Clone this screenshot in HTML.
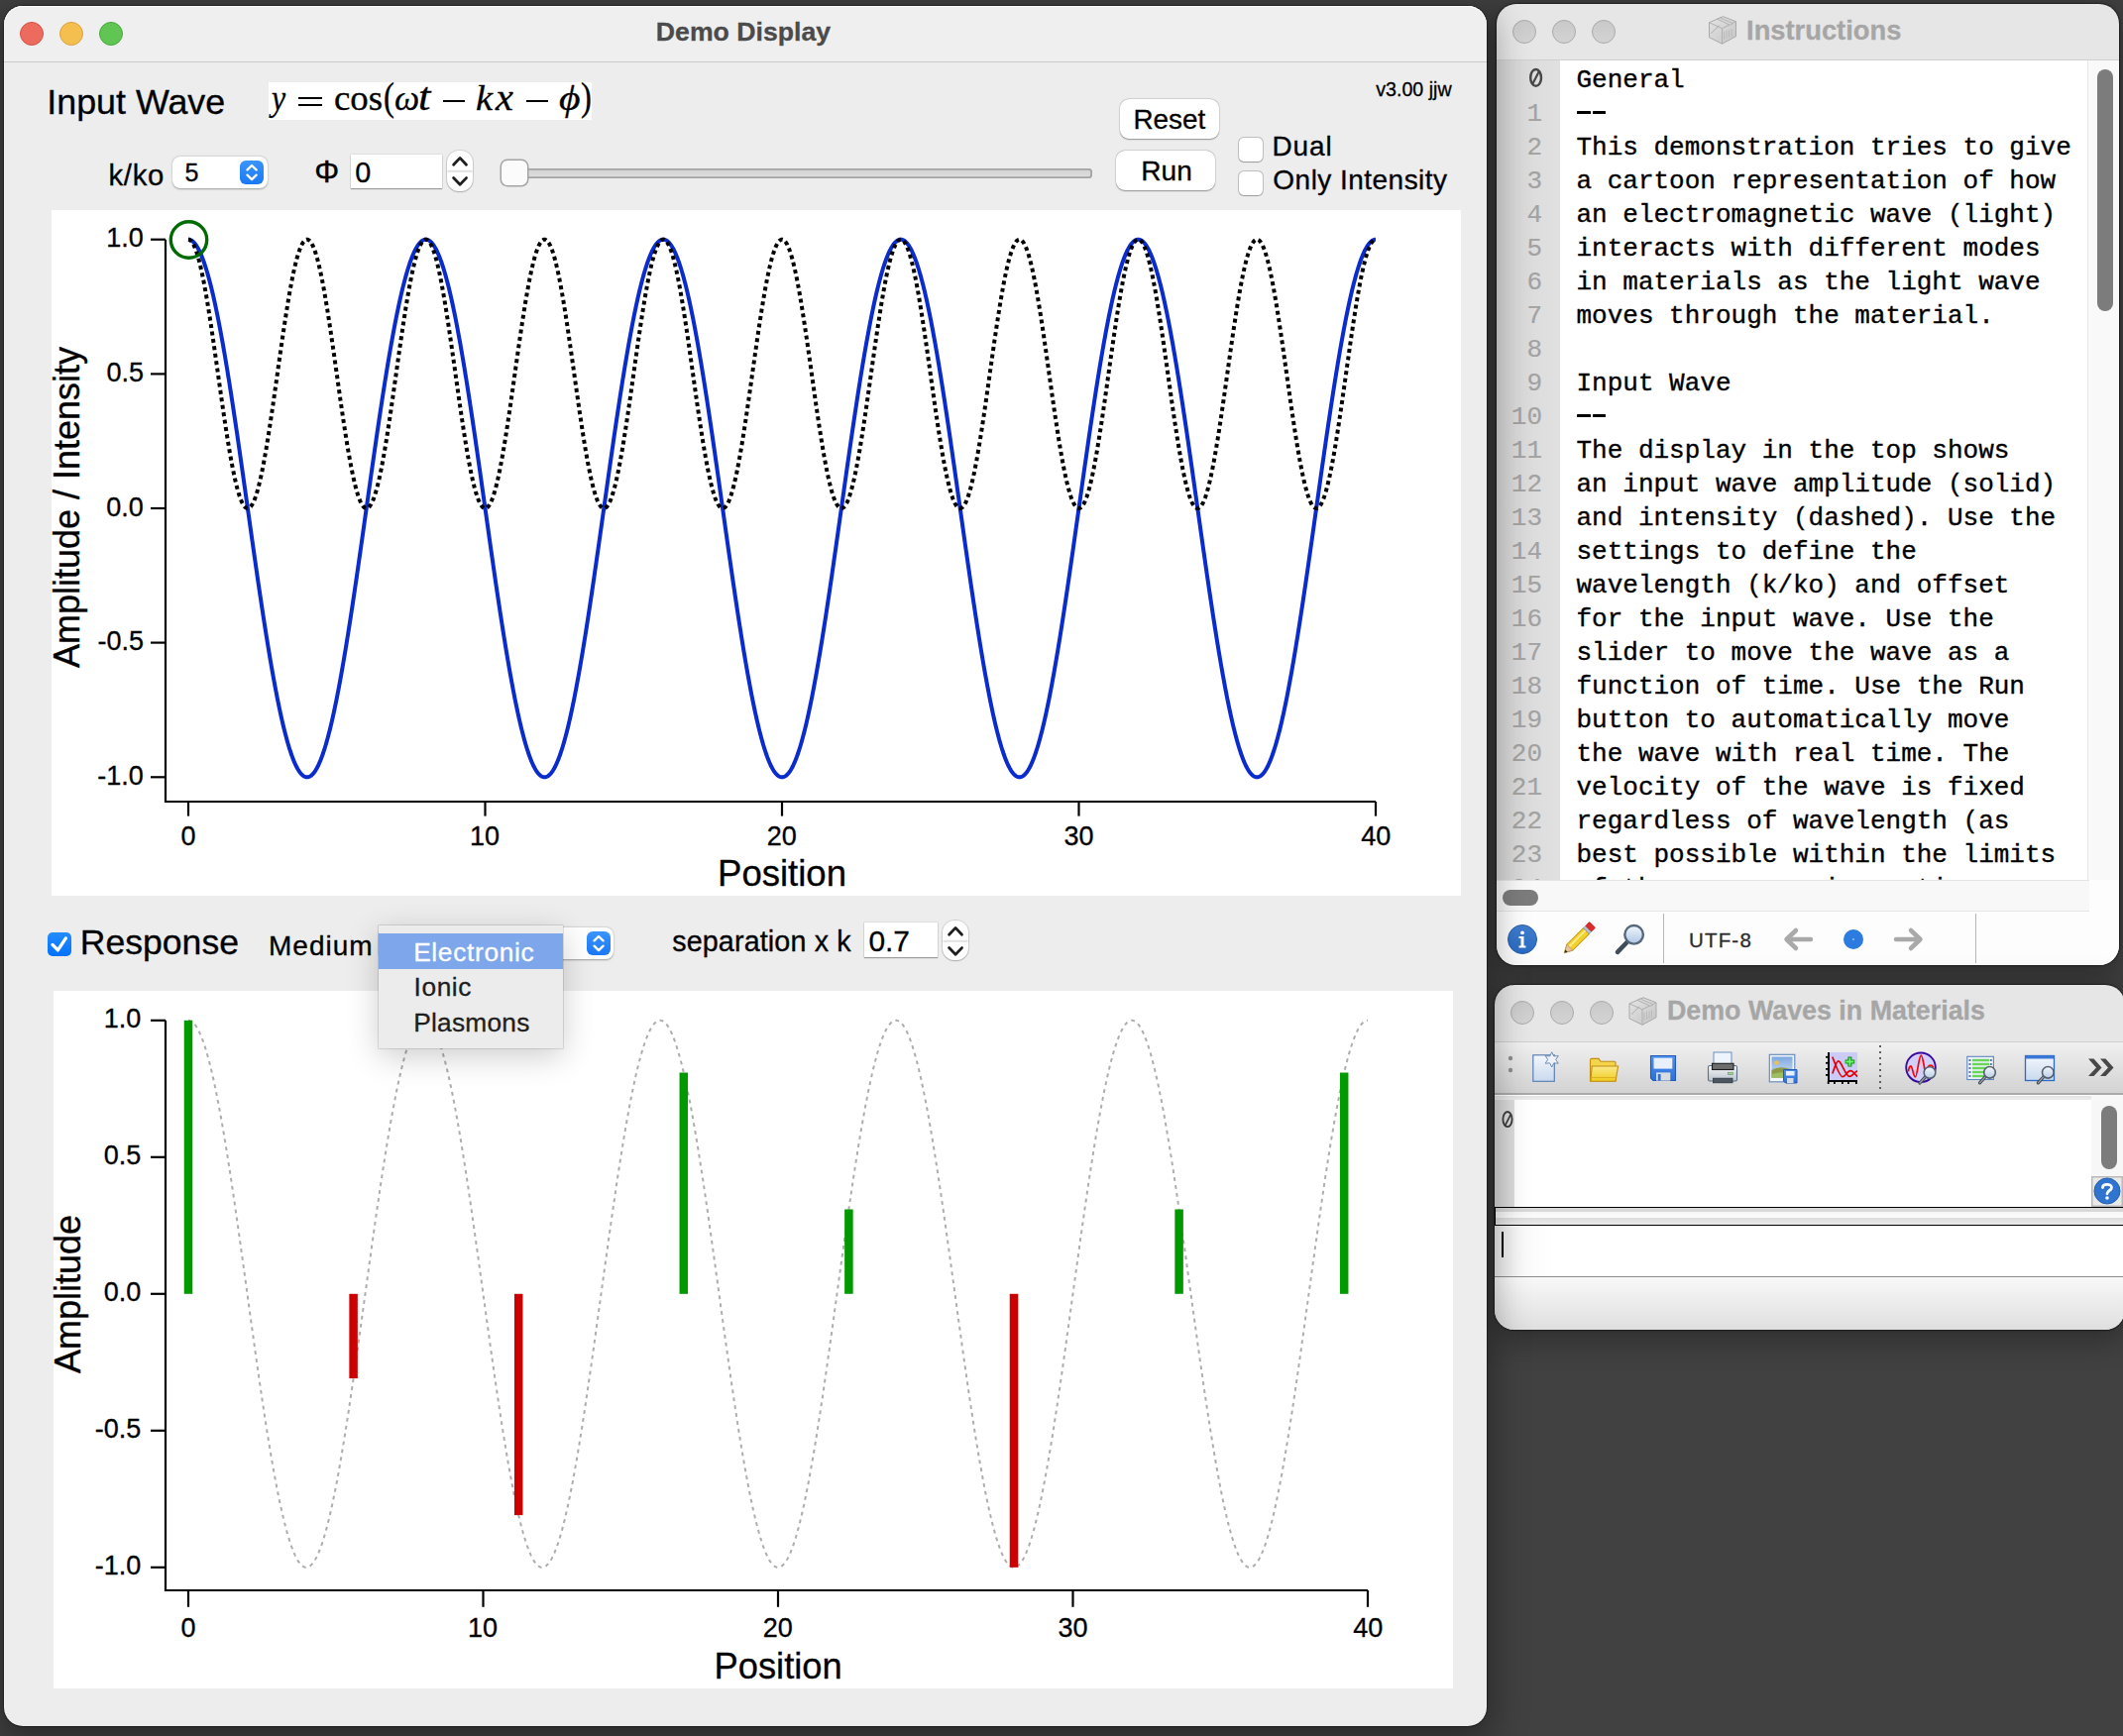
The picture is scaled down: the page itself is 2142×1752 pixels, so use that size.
<!DOCTYPE html><html><head><meta charset="utf-8"><title>Demo Display</title><style>
*{margin:0;padding:0;box-sizing:border-box}
html,body{width:2142px;height:1752px;overflow:hidden;background:#414141;font-family:"Liberation Sans",sans-serif}
.a{position:absolute}
.t{position:absolute;white-space:nowrap;line-height:1;-webkit-text-stroke-width:0.3px}
svg{position:absolute;overflow:visible}
</style></head><body>
<div class="a" style="left:0;top:0;width:2142px;height:1752px;z-index:5">
<div class="a" style="left:4px;top:6px;width:1496px;height:1736px;border-radius:19px;background:#ededed;box-shadow:0 0 1px 1px rgba(0,0,0,0.35),0 10px 36px 6px rgba(0,0,0,0.36)"></div>
<div class="a" style="left:4px;top:6px;width:1496px;height:56px;background:#efefef;border-radius:19px 19px 0 0;box-shadow:inset 0 1px 0 rgba(255,255,255,0.9)"></div>
<div class="a" style="left:4px;top:62px;width:1496px;height:1px;background:#c9c9c9"></div>
<div class="a" style="left:20px;top:22px;width:24px;height:24px;border-radius:50%;background:#ed6a5e;border:1px solid #d4524a"></div>
<div class="a" style="left:60px;top:22px;width:24px;height:24px;border-radius:50%;background:#f5bf4f;border:1px solid #d8a13c"></div>
<div class="a" style="left:100px;top:22px;width:24px;height:24px;border-radius:50%;background:#61c554;border:1px solid #4aa73e"></div>
<div class="t" style="top:19.33px;font-size:26.66px;font-family:'Liberation Sans',sans-serif;color:#4b4b4b;font-weight:700;left:661.82px;">Demo Display</div>
<div class="t" style="top:85.66px;font-size:35.84px;font-family:'Liberation Sans',sans-serif;color:#000;left:47.29px;">Input Wave</div>
<div class="a" style="left:271px;top:83px;width:326px;height:38px;background:#fff"></div>
<div class="t" style="left:273.66px;top:80.51px;font-size:36px;font-family:'Liberation Serif',serif;transform-origin:0 30.15px;transform:scale(0.8841,0.9838);font-style:italic;">y</div>
<div class="a" style="left:301px;top:97.5px;width:24px;height:2.0999999999999943px;background:#000"></div>
<div class="a" style="left:301px;top:104.6px;width:24px;height:2.0px;background:#000"></div>
<div class="t" style="left:336.50px;top:81.10px;font-size:36px;font-family:'Liberation Serif',serif;transform-origin:0 30.15px;transform:scale(1.0239,0.9934);">cos</div>
<div class="t" style="left:387.26px;top:81.00px;font-size:36px;font-family:'Liberation Serif',serif;transform-origin:0 30.15px;transform:scale(0.9085,1.1029);">(</div>
<div class="t" style="left:397.52px;top:81.00px;font-size:36px;font-family:'Liberation Serif',serif;transform-origin:0 30.15px;transform:scale(0.9894,0.9927);font-style:italic;">ω</div>
<div class="t" style="left:421.94px;top:80.95px;font-size:36px;font-family:'Liberation Serif',serif;transform-origin:0 30.15px;transform:scale(1.2362,1.1397);font-style:italic;">t</div>
<div class="a" style="left:446.8px;top:100.6px;width:22.30000000000001px;height:2.0px;background:#000"></div>
<div class="t" style="left:479.69px;top:81.15px;font-size:36px;font-family:'Liberation Serif',serif;transform-origin:0 30.15px;transform:scale(1.0667,1.0209);font-style:italic;">k</div>
<div class="t" style="left:500.49px;top:81.35px;font-size:36px;font-family:'Liberation Serif',serif;transform-origin:0 30.15px;transform:scale(1.1204,1.0349);font-style:italic;">x</div>
<div class="a" style="left:530.9px;top:100.6px;width:22.0px;height:2.0px;background:#000"></div>
<div class="t" style="left:564.35px;top:80.55px;font-size:36px;font-family:'Liberation Serif',serif;transform-origin:0 30.15px;transform:scale(1.1555,1.0048);font-style:italic;">ϕ</div>
<div class="t" style="left:585.85px;top:81.00px;font-size:36px;font-family:'Liberation Serif',serif;transform-origin:0 30.15px;transform:scale(0.9085,1.1029);">)</div>
<div class="t" style="top:81.37px;font-size:19.64px;font-family:'Liberation Sans',sans-serif;color:#000;left:1388.23px;">v3.00 jjw</div>
<div class="t" style="top:161.50px;font-size:29.30px;font-family:'Liberation Sans',sans-serif;color:#000;letter-spacing:0.690px;left:109.53px;">k/ko</div>
<div class="a" style="left:174px;top:158px;width:96px;height:32px;background:#fff;border-radius:8px;box-shadow:0 0.5px 2px rgba(0,0,0,0.35)"></div>
<div class="t" style="top:161.54px;font-size:25.00px;font-family:'Liberation Sans',sans-serif;color:#000;left:186.40px;">5</div>
<div class="a" style="left:242px;top:162px;width:24px;height:24px;background:linear-gradient(#3a95fd,#1a78f5);border-radius:6px"></div>
<svg style="left:242px;top:162px" width="24" height="24" viewBox="0 0 24 24"><path d="M7.5 9.4 L12 5 L16.6 9.4 M7.5 14.6 L12 19.1 L16.6 14.6" fill="none" stroke="#fff" stroke-width="2.3" stroke-linecap="round" stroke-linejoin="round"/></svg>
<div class="t" style="top:158.02px;font-size:31.28px;font-family:'Liberation Sans',sans-serif;color:#000;left:317.21px;">&#934;</div>
<div class="a" style="left:353.5px;top:155.7px;width:92.5px;height:34.80000000000001px;background:#fff;box-shadow:0 1px 1px rgba(0,0,0,0.30),0 0 0 0.5px rgba(0,0,0,0.12)"></div>
<div class="t" style="top:159.92px;font-size:28.80px;font-family:'Liberation Sans',sans-serif;color:#000;left:358.27px;">0</div>
<div class="a" style="left:451px;top:152px;width:26px;height:41px;background:#fff;border-radius:12px;box-shadow:0 0 0 1px rgba(0,0,0,0.10),0 1px 1.5px rgba(0,0,0,0.2)"></div>
<svg style="left:451px;top:152px" width="26" height="41" viewBox="0 0 26 41"><rect x="0.5" y="19.8" width="25" height="2" fill="#e2e2e2"/><path d="M6.6 14.2 L13.1 7.4 L19.5 14.2 M6.6 27.6 L13.1 34.2 L19.5 27.6" fill="none" stroke="#1e1e1e" stroke-width="2.8" stroke-linecap="round" stroke-linejoin="round"/></svg>
<div class="a" style="left:507px;top:170.2px;width:595px;height:9.600000000000023px;border-radius:3.5px;background:linear-gradient(#d3d3d3,#dedede);box-shadow:inset 0 0 0 1.8px #a4a4a4"></div>
<div class="a" style="left:506px;top:162.4px;width:25.5px;height:25.099999999999994px;border-radius:6px;background:#fbfbfb;box-shadow:0 0 0 1.5px #a4a4a4"></div>
<div class="a" style="left:1129.5px;top:99.8px;width:100.5px;height:40.2px;background:#fff;border-radius:9px;box-shadow:0 0.5px 1.5px rgba(0,0,0,0.35),0 0 0 0.5px rgba(0,0,0,0.1)"></div>
<div class="t" style="top:106.51px;font-size:27.86px;font-family:'Liberation Sans',sans-serif;color:#000;left:1143.41px;">Reset</div>
<div class="a" style="left:1126px;top:151.8px;width:99.59999999999991px;height:40.39999999999998px;background:#fff;border-radius:9px;box-shadow:0 0.5px 1.5px rgba(0,0,0,0.35),0 0 0 0.5px rgba(0,0,0,0.1)"></div>
<div class="t" style="top:158.62px;font-size:28.09px;font-family:'Liberation Sans',sans-serif;color:#000;left:1151.30px;">Run</div>
<div class="a" style="left:1250px;top:139.4px;width:23.5px;height:23.400000000000006px;background:#fff;border-radius:5px;box-shadow:0 0 0 1px rgba(0,0,0,0.18),0 0.5px 1px rgba(0,0,0,0.2)"></div>
<div class="a" style="left:1250px;top:173.3px;width:23.5px;height:23.399999999999977px;background:#fff;border-radius:5px;box-shadow:0 0 0 1px rgba(0,0,0,0.18),0 0.5px 1px rgba(0,0,0,0.2)"></div>
<div class="t" style="top:134.30px;font-size:28.00px;font-family:'Liberation Sans',sans-serif;color:#000;letter-spacing:0.895px;left:1283.40px;">Dual</div>
<div class="t" style="top:168.30px;font-size:28.00px;font-family:'Liberation Sans',sans-serif;color:#000;letter-spacing:0.466px;left:1284.37px;">Only Intensity</div>
<div class="a" style="left:52px;top:212px;width:1422px;height:692px;background:#fff"></div>
<svg style="left:0;top:0" width="2142" height="1752" viewBox="0 0 2142 1752"><path d="M167 241.7 V809 H1388" fill="none" stroke="#000" stroke-width="2.2"/><path d="M152 241.7 H167" stroke="#000" stroke-width="2.2"/><path d="M152 377.4 H167" stroke="#000" stroke-width="2.2"/><path d="M152 513.0 H167" stroke="#000" stroke-width="2.2"/><path d="M152 648.6 H167" stroke="#000" stroke-width="2.2"/><path d="M152 784.3 H167" stroke="#000" stroke-width="2.2"/><path d="M190.0 809 V823.6" stroke="#000" stroke-width="2.2"/><path d="M489.5 809 V823.6" stroke="#000" stroke-width="2.2"/><path d="M789.0 809 V823.6" stroke="#000" stroke-width="2.2"/><path d="M1088.5 809 V823.6" stroke="#000" stroke-width="2.2"/><path d="M1388.0 809 V823.6" stroke="#000" stroke-width="2.2"/><polyline points="190.00,241.70 190.60,241.73 191.20,241.83 191.80,242.00 192.40,242.24 193.00,242.54 193.59,242.90 194.19,243.34 194.79,243.84 195.39,244.41 195.99,245.04 196.59,245.74 197.19,246.51 197.79,247.34 198.39,248.23 198.99,249.20 199.58,250.22 200.18,251.32 200.78,252.47 201.38,253.69 201.98,254.98 202.58,256.33 203.18,257.74 203.78,259.21 204.38,260.75 204.97,262.35 205.57,264.01 206.17,265.74 206.77,267.52 207.37,269.37 207.97,271.27 208.57,273.23 209.17,275.26 209.77,277.34 210.37,279.48 210.97,281.68 211.56,283.93 212.16,286.25 212.76,288.61 213.36,291.04 213.96,293.51 214.56,296.05 215.16,298.63 215.76,301.27 216.36,303.96 216.95,306.70 217.55,309.49 218.15,312.34 218.75,315.23 219.35,318.17 219.95,321.16 220.55,324.20 221.15,327.28 221.75,330.41 222.35,333.59 222.94,336.80 223.54,340.07 224.14,343.37 224.74,346.72 225.34,350.11 225.94,353.53 226.54,357.00 227.14,360.51 227.74,364.05 228.34,367.63 228.94,371.25 229.53,374.90 230.13,378.58 230.73,382.30 231.33,386.05 231.93,389.83 232.53,393.64 233.13,397.49 233.73,401.36 234.33,405.25 234.93,409.18 235.52,413.13 236.12,417.10 236.72,421.10 237.32,425.12 237.92,429.16 238.52,433.23 239.12,437.31 239.72,441.41 240.32,445.53 240.91,449.67 241.51,453.82 242.11,457.98 242.71,462.16 243.31,466.36 243.91,470.56 244.51,474.77 245.11,479.00 245.71,483.23 246.31,487.47 246.91,491.71 247.50,495.96 248.10,500.22 248.70,504.48 249.30,508.74 249.90,513.00 250.50,517.26 251.10,521.52 251.70,525.78 252.30,530.04 252.90,534.29 253.49,538.53 254.09,542.77 254.69,547.00 255.29,551.23 255.89,555.44 256.49,559.64 257.09,563.84 257.69,568.02 258.29,572.18 258.88,576.33 259.48,580.47 260.08,584.59 260.68,588.69 261.28,592.77 261.88,596.84 262.48,600.88 263.08,604.90 263.68,608.90 264.28,612.87 264.88,616.82 265.47,620.75 266.07,624.64 266.67,628.51 267.27,632.36 267.87,636.17 268.47,639.95 269.07,643.70 269.67,647.42 270.27,651.10 270.87,654.75 271.46,658.37 272.06,661.95 272.66,665.49 273.26,669.00 273.86,672.47 274.46,675.89 275.06,679.28 275.66,682.63 276.26,685.93 276.86,689.20 277.45,692.41 278.05,695.59 278.65,698.72 279.25,701.80 279.85,704.84 280.45,707.83 281.05,710.77 281.65,713.66 282.25,716.51 282.85,719.30 283.44,722.04 284.04,724.73 284.64,727.37 285.24,729.95 285.84,732.49 286.44,734.96 287.04,737.39 287.64,739.75 288.24,742.07 288.83,744.32 289.43,746.52 290.03,748.66 290.63,750.74 291.23,752.77 291.83,754.73 292.43,756.63 293.03,758.48 293.63,760.26 294.23,761.99 294.82,763.65 295.42,765.25 296.02,766.79 296.62,768.26 297.22,769.67 297.82,771.02 298.42,772.31 299.02,773.53 299.62,774.68 300.22,775.78 300.81,776.80 301.41,777.77 302.01,778.66 302.61,779.49 303.21,780.26 303.81,780.96 304.41,781.59 305.01,782.16 305.61,782.66 306.21,783.10 306.81,783.46 307.40,783.76 308.00,784.00 308.60,784.17 309.20,784.27 309.80,784.30 310.40,784.27 311.00,784.17 311.60,784.00 312.20,783.76 312.79,783.46 313.39,783.10 313.99,782.66 314.59,782.16 315.19,781.59 315.79,780.96 316.39,780.26 316.99,779.49 317.59,778.66 318.19,777.77 318.78,776.80 319.38,775.78 319.98,774.68 320.58,773.53 321.18,772.31 321.78,771.02 322.38,769.67 322.98,768.26 323.58,766.79 324.18,765.25 324.77,763.65 325.37,761.99 325.97,760.26 326.57,758.48 327.17,756.63 327.77,754.73 328.37,752.77 328.97,750.74 329.57,748.66 330.17,746.52 330.76,744.32 331.36,742.07 331.96,739.75 332.56,737.39 333.16,734.96 333.76,732.49 334.36,729.95 334.96,727.37 335.56,724.73 336.16,722.04 336.75,719.30 337.35,716.51 337.95,713.66 338.55,710.77 339.15,707.83 339.75,704.84 340.35,701.80 340.95,698.72 341.55,695.59 342.15,692.41 342.75,689.20 343.34,685.93 343.94,682.63 344.54,679.28 345.14,675.89 345.74,672.47 346.34,669.00 346.94,665.49 347.54,661.95 348.14,658.37 348.74,654.75 349.33,651.10 349.93,647.42 350.53,643.70 351.13,639.95 351.73,636.17 352.33,632.36 352.93,628.51 353.53,624.64 354.13,620.75 354.73,616.82 355.32,612.87 355.92,608.90 356.52,604.90 357.12,600.88 357.72,596.84 358.32,592.77 358.92,588.69 359.52,584.59 360.12,580.47 360.72,576.33 361.31,572.18 361.91,568.02 362.51,563.84 363.11,559.64 363.71,555.44 364.31,551.23 364.91,547.00 365.51,542.77 366.11,538.53 366.71,534.29 367.30,530.04 367.90,525.78 368.50,521.52 369.10,517.26 369.70,513.00 370.30,508.74 370.90,504.48 371.50,500.22 372.10,495.96 372.69,491.71 373.29,487.47 373.89,483.23 374.49,479.00 375.09,474.77 375.69,470.56 376.29,466.36 376.89,462.16 377.49,457.98 378.09,453.82 378.69,449.67 379.28,445.53 379.88,441.41 380.48,437.31 381.08,433.23 381.68,429.16 382.28,425.12 382.88,421.10 383.48,417.10 384.08,413.13 384.67,409.18 385.27,405.25 385.87,401.36 386.47,397.49 387.07,393.64 387.67,389.83 388.27,386.05 388.87,382.30 389.47,378.58 390.07,374.90 390.66,371.25 391.26,367.63 391.86,364.05 392.46,360.51 393.06,357.00 393.66,353.53 394.26,350.11 394.86,346.72 395.46,343.37 396.06,340.07 396.65,336.80 397.25,333.59 397.85,330.41 398.45,327.28 399.05,324.20 399.65,321.16 400.25,318.17 400.85,315.23 401.45,312.34 402.05,309.49 402.64,306.70 403.24,303.96 403.84,301.27 404.44,298.63 405.04,296.05 405.64,293.51 406.24,291.04 406.84,288.61 407.44,286.25 408.04,283.93 408.63,281.68 409.23,279.48 409.83,277.34 410.43,275.26 411.03,273.23 411.63,271.27 412.23,269.37 412.83,267.52 413.43,265.74 414.03,264.01 414.62,262.35 415.22,260.75 415.82,259.21 416.42,257.74 417.02,256.33 417.62,254.98 418.22,253.69 418.82,252.47 419.42,251.32 420.02,250.22 420.62,249.20 421.21,248.23 421.81,247.34 422.41,246.51 423.01,245.74 423.61,245.04 424.21,244.41 424.81,243.84 425.41,243.34 426.01,242.90 426.61,242.54 427.20,242.24 427.80,242.00 428.40,241.83 429.00,241.73 429.60,241.70 430.20,241.73 430.80,241.83 431.40,242.00 432.00,242.24 432.59,242.54 433.19,242.90 433.79,243.34 434.39,243.84 434.99,244.41 435.59,245.04 436.19,245.74 436.79,246.51 437.39,247.34 437.99,248.23 438.59,249.20 439.18,250.22 439.78,251.32 440.38,252.47 440.98,253.69 441.58,254.98 442.18,256.33 442.78,257.74 443.38,259.21 443.98,260.75 444.57,262.35 445.17,264.01 445.77,265.74 446.37,267.52 446.97,269.37 447.57,271.27 448.17,273.23 448.77,275.26 449.37,277.34 449.97,279.48 450.56,281.68 451.16,283.93 451.76,286.25 452.36,288.61 452.96,291.04 453.56,293.51 454.16,296.05 454.76,298.63 455.36,301.27 455.96,303.96 456.56,306.70 457.15,309.49 457.75,312.34 458.35,315.23 458.95,318.17 459.55,321.16 460.15,324.20 460.75,327.28 461.35,330.41 461.95,333.59 462.54,336.80 463.14,340.07 463.74,343.37 464.34,346.72 464.94,350.11 465.54,353.53 466.14,357.00 466.74,360.51 467.34,364.05 467.94,367.63 468.54,371.25 469.13,374.90 469.73,378.58 470.33,382.30 470.93,386.05 471.53,389.83 472.13,393.64 472.73,397.49 473.33,401.36 473.93,405.25 474.52,409.18 475.12,413.13 475.72,417.10 476.32,421.10 476.92,425.12 477.52,429.16 478.12,433.23 478.72,437.31 479.32,441.41 479.92,445.53 480.51,449.67 481.11,453.82 481.71,457.98 482.31,462.16 482.91,466.36 483.51,470.56 484.11,474.77 484.71,479.00 485.31,483.23 485.91,487.47 486.50,491.71 487.10,495.96 487.70,500.22 488.30,504.48 488.90,508.74 489.50,513.00 490.10,517.26 490.70,521.52 491.30,525.78 491.90,530.04 492.50,534.29 493.09,538.53 493.69,542.77 494.29,547.00 494.89,551.23 495.49,555.44 496.09,559.64 496.69,563.84 497.29,568.02 497.89,572.18 498.49,576.33 499.08,580.47 499.68,584.59 500.28,588.69 500.88,592.77 501.48,596.84 502.08,600.88 502.68,604.90 503.28,608.90 503.88,612.87 504.47,616.82 505.07,620.75 505.67,624.64 506.27,628.51 506.87,632.36 507.47,636.17 508.07,639.95 508.67,643.70 509.27,647.42 509.87,651.10 510.46,654.75 511.06,658.37 511.66,661.95 512.26,665.49 512.86,669.00 513.46,672.47 514.06,675.89 514.66,679.28 515.26,682.63 515.86,685.93 516.45,689.20 517.05,692.41 517.65,695.59 518.25,698.72 518.85,701.80 519.45,704.84 520.05,707.83 520.65,710.77 521.25,713.66 521.85,716.51 522.44,719.30 523.04,722.04 523.64,724.73 524.24,727.37 524.84,729.95 525.44,732.49 526.04,734.96 526.64,737.39 527.24,739.75 527.84,742.07 528.43,744.32 529.03,746.52 529.63,748.66 530.23,750.74 530.83,752.77 531.43,754.73 532.03,756.63 532.63,758.48 533.23,760.26 533.83,761.99 534.42,763.65 535.02,765.25 535.62,766.79 536.22,768.26 536.82,769.67 537.42,771.02 538.02,772.31 538.62,773.53 539.22,774.68 539.82,775.78 540.41,776.80 541.01,777.77 541.61,778.66 542.21,779.49 542.81,780.26 543.41,780.96 544.01,781.59 544.61,782.16 545.21,782.66 545.81,783.10 546.40,783.46 547.00,783.76 547.60,784.00 548.20,784.17 548.80,784.27 549.40,784.30 550.00,784.27 550.60,784.17 551.20,784.00 551.80,783.76 552.39,783.46 552.99,783.10 553.59,782.66 554.19,782.16 554.79,781.59 555.39,780.96 555.99,780.26 556.59,779.49 557.19,778.66 557.79,777.77 558.38,776.80 558.98,775.78 559.58,774.68 560.18,773.53 560.78,772.31 561.38,771.02 561.98,769.67 562.58,768.26 563.18,766.79 563.78,765.25 564.38,763.65 564.97,761.99 565.57,760.26 566.17,758.48 566.77,756.63 567.37,754.73 567.97,752.77 568.57,750.74 569.17,748.66 569.77,746.52 570.37,744.32 570.96,742.07 571.56,739.75 572.16,737.39 572.76,734.96 573.36,732.49 573.96,729.95 574.56,727.37 575.16,724.73 575.76,722.04 576.36,719.30 576.95,716.51 577.55,713.66 578.15,710.77 578.75,707.83 579.35,704.84 579.95,701.80 580.55,698.72 581.15,695.59 581.75,692.41 582.35,689.20 582.94,685.93 583.54,682.63 584.14,679.28 584.74,675.89 585.34,672.47 585.94,669.00 586.54,665.49 587.14,661.95 587.74,658.37 588.34,654.75 588.93,651.10 589.53,647.42 590.13,643.70 590.73,639.95 591.33,636.17 591.93,632.36 592.53,628.51 593.13,624.64 593.73,620.75 594.33,616.82 594.92,612.87 595.52,608.90 596.12,604.90 596.72,600.88 597.32,596.84 597.92,592.77 598.52,588.69 599.12,584.59 599.72,580.47 600.31,576.33 600.91,572.18 601.51,568.02 602.11,563.84 602.71,559.64 603.31,555.44 603.91,551.23 604.51,547.00 605.11,542.77 605.71,538.53 606.31,534.29 606.90,530.04 607.50,525.78 608.10,521.52 608.70,517.26 609.30,513.00 609.90,508.74 610.50,504.48 611.10,500.22 611.70,495.96 612.29,491.71 612.89,487.47 613.49,483.23 614.09,479.00 614.69,474.77 615.29,470.56 615.89,466.36 616.49,462.16 617.09,457.98 617.69,453.82 618.29,449.67 618.88,445.53 619.48,441.41 620.08,437.31 620.68,433.23 621.28,429.16 621.88,425.12 622.48,421.10 623.08,417.10 623.68,413.13 624.27,409.18 624.87,405.25 625.47,401.36 626.07,397.49 626.67,393.64 627.27,389.83 627.87,386.05 628.47,382.30 629.07,378.58 629.67,374.90 630.26,371.25 630.86,367.63 631.46,364.05 632.06,360.51 632.66,357.00 633.26,353.53 633.86,350.11 634.46,346.72 635.06,343.37 635.66,340.07 636.25,336.80 636.85,333.59 637.45,330.41 638.05,327.28 638.65,324.20 639.25,321.16 639.85,318.17 640.45,315.23 641.05,312.34 641.65,309.49 642.25,306.70 642.84,303.96 643.44,301.27 644.04,298.63 644.64,296.05 645.24,293.51 645.84,291.04 646.44,288.61 647.04,286.25 647.64,283.93 648.24,281.68 648.83,279.48 649.43,277.34 650.03,275.26 650.63,273.23 651.23,271.27 651.83,269.37 652.43,267.52 653.03,265.74 653.63,264.01 654.22,262.35 654.82,260.75 655.42,259.21 656.02,257.74 656.62,256.33 657.22,254.98 657.82,253.69 658.42,252.47 659.02,251.32 659.62,250.22 660.21,249.20 660.81,248.23 661.41,247.34 662.01,246.51 662.61,245.74 663.21,245.04 663.81,244.41 664.41,243.84 665.01,243.34 665.61,242.90 666.20,242.54 666.80,242.24 667.40,242.00 668.00,241.83 668.60,241.73 669.20,241.70 669.80,241.73 670.40,241.83 671.00,242.00 671.60,242.24 672.20,242.54 672.79,242.90 673.39,243.34 673.99,243.84 674.59,244.41 675.19,245.04 675.79,245.74 676.39,246.51 676.99,247.34 677.59,248.23 678.18,249.20 678.78,250.22 679.38,251.32 679.98,252.47 680.58,253.69 681.18,254.98 681.78,256.33 682.38,257.74 682.98,259.21 683.58,260.75 684.17,262.35 684.77,264.01 685.37,265.74 685.97,267.52 686.57,269.37 687.17,271.27 687.77,273.23 688.37,275.26 688.97,277.34 689.57,279.48 690.16,281.68 690.76,283.93 691.36,286.25 691.96,288.61 692.56,291.04 693.16,293.51 693.76,296.05 694.36,298.63 694.96,301.27 695.56,303.96 696.15,306.70 696.75,309.49 697.35,312.34 697.95,315.23 698.55,318.17 699.15,321.16 699.75,324.20 700.35,327.28 700.95,330.41 701.55,333.59 702.14,336.80 702.74,340.07 703.34,343.37 703.94,346.72 704.54,350.11 705.14,353.53 705.74,357.00 706.34,360.51 706.94,364.05 707.54,367.63 708.13,371.25 708.73,374.90 709.33,378.58 709.93,382.30 710.53,386.05 711.13,389.83 711.73,393.64 712.33,397.49 712.93,401.36 713.53,405.25 714.12,409.18 714.72,413.13 715.32,417.10 715.92,421.10 716.52,425.12 717.12,429.16 717.72,433.23 718.32,437.31 718.92,441.41 719.52,445.53 720.12,449.67 720.71,453.82 721.31,457.98 721.91,462.16 722.51,466.36 723.11,470.56 723.71,474.77 724.31,479.00 724.91,483.23 725.51,487.47 726.10,491.71 726.70,495.96 727.30,500.22 727.90,504.48 728.50,508.74 729.10,513.00 729.70,517.26 730.30,521.52 730.90,525.78 731.50,530.04 732.10,534.29 732.69,538.53 733.29,542.77 733.89,547.00 734.49,551.23 735.09,555.44 735.69,559.64 736.29,563.84 736.89,568.02 737.49,572.18 738.09,576.33 738.68,580.47 739.28,584.59 739.88,588.69 740.48,592.77 741.08,596.84 741.68,600.88 742.28,604.90 742.88,608.90 743.48,612.87 744.07,616.82 744.67,620.75 745.27,624.64 745.87,628.51 746.47,632.36 747.07,636.17 747.67,639.95 748.27,643.70 748.87,647.42 749.47,651.10 750.06,654.75 750.66,658.37 751.26,661.95 751.86,665.49 752.46,669.00 753.06,672.47 753.66,675.89 754.26,679.28 754.86,682.63 755.46,685.93 756.05,689.20 756.65,692.41 757.25,695.59 757.85,698.72 758.45,701.80 759.05,704.84 759.65,707.83 760.25,710.77 760.85,713.66 761.45,716.51 762.05,719.30 762.64,722.04 763.24,724.73 763.84,727.37 764.44,729.95 765.04,732.49 765.64,734.96 766.24,737.39 766.84,739.75 767.44,742.07 768.03,744.32 768.63,746.52 769.23,748.66 769.83,750.74 770.43,752.77 771.03,754.73 771.63,756.63 772.23,758.48 772.83,760.26 773.43,761.99 774.02,763.65 774.62,765.25 775.22,766.79 775.82,768.26 776.42,769.67 777.02,771.02 777.62,772.31 778.22,773.53 778.82,774.68 779.42,775.78 780.01,776.80 780.61,777.77 781.21,778.66 781.81,779.49 782.41,780.26 783.01,780.96 783.61,781.59 784.21,782.16 784.81,782.66 785.41,783.10 786.00,783.46 786.60,783.76 787.20,784.00 787.80,784.17 788.40,784.27 789.00,784.30 789.60,784.27 790.20,784.17 790.80,784.00 791.40,783.76 792.00,783.46 792.59,783.10 793.19,782.66 793.79,782.16 794.39,781.59 794.99,780.96 795.59,780.26 796.19,779.49 796.79,778.66 797.39,777.77 797.99,776.80 798.58,775.78 799.18,774.68 799.78,773.53 800.38,772.31 800.98,771.02 801.58,769.67 802.18,768.26 802.78,766.79 803.38,765.25 803.98,763.65 804.57,761.99 805.17,760.26 805.77,758.48 806.37,756.63 806.97,754.73 807.57,752.77 808.17,750.74 808.77,748.66 809.37,746.52 809.96,744.32 810.56,742.07 811.16,739.75 811.76,737.39 812.36,734.96 812.96,732.49 813.56,729.95 814.16,727.37 814.76,724.73 815.36,722.04 815.95,719.30 816.55,716.51 817.15,713.66 817.75,710.77 818.35,707.83 818.95,704.84 819.55,701.80 820.15,698.72 820.75,695.59 821.35,692.41 821.95,689.20 822.54,685.93 823.14,682.63 823.74,679.28 824.34,675.89 824.94,672.47 825.54,669.00 826.14,665.49 826.74,661.95 827.34,658.37 827.94,654.75 828.53,651.10 829.13,647.42 829.73,643.70 830.33,639.95 830.93,636.17 831.53,632.36 832.13,628.51 832.73,624.64 833.33,620.75 833.92,616.82 834.52,612.87 835.12,608.90 835.72,604.90 836.32,600.88 836.92,596.84 837.52,592.77 838.12,588.69 838.72,584.59 839.32,580.47 839.91,576.33 840.51,572.18 841.11,568.02 841.71,563.84 842.31,559.64 842.91,555.44 843.51,551.23 844.11,547.00 844.71,542.77 845.31,538.53 845.90,534.29 846.50,530.04 847.10,525.78 847.70,521.52 848.30,517.26 848.90,513.00 849.50,508.74 850.10,504.48 850.70,500.22 851.30,495.96 851.89,491.71 852.49,487.47 853.09,483.23 853.69,479.00 854.29,474.77 854.89,470.56 855.49,466.36 856.09,462.16 856.69,457.98 857.29,453.82 857.88,449.67 858.48,445.53 859.08,441.41 859.68,437.31 860.28,433.23 860.88,429.16 861.48,425.12 862.08,421.10 862.68,417.10 863.28,413.13 863.88,409.18 864.47,405.25 865.07,401.36 865.67,397.49 866.27,393.64 866.87,389.83 867.47,386.05 868.07,382.30 868.67,378.58 869.27,374.90 869.87,371.25 870.46,367.63 871.06,364.05 871.66,360.51 872.26,357.00 872.86,353.53 873.46,350.11 874.06,346.72 874.66,343.37 875.26,340.07 875.85,336.80 876.45,333.59 877.05,330.41 877.65,327.28 878.25,324.20 878.85,321.16 879.45,318.17 880.05,315.23 880.65,312.34 881.25,309.49 881.85,306.70 882.44,303.96 883.04,301.27 883.64,298.63 884.24,296.05 884.84,293.51 885.44,291.04 886.04,288.61 886.64,286.25 887.24,283.93 887.84,281.68 888.43,279.48 889.03,277.34 889.63,275.26 890.23,273.23 890.83,271.27 891.43,269.37 892.03,267.52 892.63,265.74 893.23,264.01 893.82,262.35 894.42,260.75 895.02,259.21 895.62,257.74 896.22,256.33 896.82,254.98 897.42,253.69 898.02,252.47 898.62,251.32 899.22,250.22 899.81,249.20 900.41,248.23 901.01,247.34 901.61,246.51 902.21,245.74 902.81,245.04 903.41,244.41 904.01,243.84 904.61,243.34 905.21,242.90 905.80,242.54 906.40,242.24 907.00,242.00 907.60,241.83 908.20,241.73 908.80,241.70 909.40,241.73 910.00,241.83 910.60,242.00 911.20,242.24 911.80,242.54 912.39,242.90 912.99,243.34 913.59,243.84 914.19,244.41 914.79,245.04 915.39,245.74 915.99,246.51 916.59,247.34 917.19,248.23 917.78,249.20 918.38,250.22 918.98,251.32 919.58,252.47 920.18,253.69 920.78,254.98 921.38,256.33 921.98,257.74 922.58,259.21 923.18,260.75 923.77,262.35 924.37,264.01 924.97,265.74 925.57,267.52 926.17,269.37 926.77,271.27 927.37,273.23 927.97,275.26 928.57,277.34 929.17,279.48 929.76,281.68 930.36,283.93 930.96,286.25 931.56,288.61 932.16,291.04 932.76,293.51 933.36,296.05 933.96,298.63 934.56,301.27 935.16,303.96 935.75,306.70 936.35,309.49 936.95,312.34 937.55,315.23 938.15,318.17 938.75,321.16 939.35,324.20 939.95,327.28 940.55,330.41 941.15,333.59 941.75,336.80 942.34,340.07 942.94,343.37 943.54,346.72 944.14,350.11 944.74,353.53 945.34,357.00 945.94,360.51 946.54,364.05 947.14,367.63 947.74,371.25 948.33,374.90 948.93,378.58 949.53,382.30 950.13,386.05 950.73,389.83 951.33,393.64 951.93,397.49 952.53,401.36 953.13,405.25 953.73,409.18 954.32,413.13 954.92,417.10 955.52,421.10 956.12,425.12 956.72,429.16 957.32,433.23 957.92,437.31 958.52,441.41 959.12,445.53 959.71,449.67 960.31,453.82 960.91,457.98 961.51,462.16 962.11,466.36 962.71,470.56 963.31,474.77 963.91,479.00 964.51,483.23 965.11,487.47 965.70,491.71 966.30,495.96 966.90,500.22 967.50,504.48 968.10,508.74 968.70,513.00 969.30,517.26 969.90,521.52 970.50,525.78 971.10,530.04 971.70,534.29 972.29,538.53 972.89,542.77 973.49,547.00 974.09,551.23 974.69,555.44 975.29,559.64 975.89,563.84 976.49,568.02 977.09,572.18 977.69,576.33 978.28,580.47 978.88,584.59 979.48,588.69 980.08,592.77 980.68,596.84 981.28,600.88 981.88,604.90 982.48,608.90 983.08,612.87 983.67,616.82 984.27,620.75 984.87,624.64 985.47,628.51 986.07,632.36 986.67,636.17 987.27,639.95 987.87,643.70 988.47,647.42 989.07,651.10 989.66,654.75 990.26,658.37 990.86,661.95 991.46,665.49 992.06,669.00 992.66,672.47 993.26,675.89 993.86,679.28 994.46,682.63 995.06,685.93 995.65,689.20 996.25,692.41 996.85,695.59 997.45,698.72 998.05,701.80 998.65,704.84 999.25,707.83 999.85,710.77 1000.45,713.66 1001.05,716.51 1001.64,719.30 1002.24,722.04 1002.84,724.73 1003.44,727.37 1004.04,729.95 1004.64,732.49 1005.24,734.96 1005.84,737.39 1006.44,739.75 1007.04,742.07 1007.63,744.32 1008.23,746.52 1008.83,748.66 1009.43,750.74 1010.03,752.77 1010.63,754.73 1011.23,756.63 1011.83,758.48 1012.43,760.26 1013.03,761.99 1013.62,763.65 1014.22,765.25 1014.82,766.79 1015.42,768.26 1016.02,769.67 1016.62,771.02 1017.22,772.31 1017.82,773.53 1018.42,774.68 1019.02,775.78 1019.62,776.80 1020.21,777.77 1020.81,778.66 1021.41,779.49 1022.01,780.26 1022.61,780.96 1023.21,781.59 1023.81,782.16 1024.41,782.66 1025.01,783.10 1025.61,783.46 1026.20,783.76 1026.80,784.00 1027.40,784.17 1028.00,784.27 1028.60,784.30 1029.20,784.27 1029.80,784.17 1030.40,784.00 1031.00,783.76 1031.60,783.46 1032.19,783.10 1032.79,782.66 1033.39,782.16 1033.99,781.59 1034.59,780.96 1035.19,780.26 1035.79,779.49 1036.39,778.66 1036.99,777.77 1037.59,776.80 1038.18,775.78 1038.78,774.68 1039.38,773.53 1039.98,772.31 1040.58,771.02 1041.18,769.67 1041.78,768.26 1042.38,766.79 1042.98,765.25 1043.57,763.65 1044.17,761.99 1044.77,760.26 1045.37,758.48 1045.97,756.63 1046.57,754.73 1047.17,752.77 1047.77,750.74 1048.37,748.66 1048.97,746.52 1049.57,744.32 1050.16,742.07 1050.76,739.75 1051.36,737.39 1051.96,734.96 1052.56,732.49 1053.16,729.95 1053.76,727.37 1054.36,724.73 1054.96,722.04 1055.55,719.30 1056.15,716.51 1056.75,713.66 1057.35,710.77 1057.95,707.83 1058.55,704.84 1059.15,701.80 1059.75,698.72 1060.35,695.59 1060.95,692.41 1061.55,689.20 1062.14,685.93 1062.74,682.63 1063.34,679.28 1063.94,675.89 1064.54,672.47 1065.14,669.00 1065.74,665.49 1066.34,661.95 1066.94,658.37 1067.53,654.75 1068.13,651.10 1068.73,647.42 1069.33,643.70 1069.93,639.95 1070.53,636.17 1071.13,632.36 1071.73,628.51 1072.33,624.64 1072.93,620.75 1073.53,616.82 1074.12,612.87 1074.72,608.90 1075.32,604.90 1075.92,600.88 1076.52,596.84 1077.12,592.77 1077.72,588.69 1078.32,584.59 1078.92,580.47 1079.51,576.33 1080.11,572.18 1080.71,568.02 1081.31,563.84 1081.91,559.64 1082.51,555.44 1083.11,551.23 1083.71,547.00 1084.31,542.77 1084.91,538.53 1085.50,534.29 1086.10,530.04 1086.70,525.78 1087.30,521.52 1087.90,517.26 1088.50,513.00 1089.10,508.74 1089.70,504.48 1090.30,500.22 1090.90,495.96 1091.49,491.71 1092.09,487.47 1092.69,483.23 1093.29,479.00 1093.89,474.77 1094.49,470.56 1095.09,466.36 1095.69,462.16 1096.29,457.98 1096.89,453.82 1097.49,449.67 1098.08,445.53 1098.68,441.41 1099.28,437.31 1099.88,433.23 1100.48,429.16 1101.08,425.12 1101.68,421.10 1102.28,417.10 1102.88,413.13 1103.47,409.18 1104.07,405.25 1104.67,401.36 1105.27,397.49 1105.87,393.64 1106.47,389.83 1107.07,386.05 1107.67,382.30 1108.27,378.58 1108.87,374.90 1109.46,371.25 1110.06,367.63 1110.66,364.05 1111.26,360.51 1111.86,357.00 1112.46,353.53 1113.06,350.11 1113.66,346.72 1114.26,343.37 1114.86,340.07 1115.45,336.80 1116.05,333.59 1116.65,330.41 1117.25,327.28 1117.85,324.20 1118.45,321.16 1119.05,318.17 1119.65,315.23 1120.25,312.34 1120.85,309.49 1121.45,306.70 1122.04,303.96 1122.64,301.27 1123.24,298.63 1123.84,296.05 1124.44,293.51 1125.04,291.04 1125.64,288.61 1126.24,286.25 1126.84,283.93 1127.43,281.68 1128.03,279.48 1128.63,277.34 1129.23,275.26 1129.83,273.23 1130.43,271.27 1131.03,269.37 1131.63,267.52 1132.23,265.74 1132.83,264.01 1133.42,262.35 1134.02,260.75 1134.62,259.21 1135.22,257.74 1135.82,256.33 1136.42,254.98 1137.02,253.69 1137.62,252.47 1138.22,251.32 1138.82,250.22 1139.41,249.20 1140.01,248.23 1140.61,247.34 1141.21,246.51 1141.81,245.74 1142.41,245.04 1143.01,244.41 1143.61,243.84 1144.21,243.34 1144.81,242.90 1145.40,242.54 1146.00,242.24 1146.60,242.00 1147.20,241.83 1147.80,241.73 1148.40,241.70 1149.00,241.73 1149.60,241.83 1150.20,242.00 1150.80,242.24 1151.39,242.54 1151.99,242.90 1152.59,243.34 1153.19,243.84 1153.79,244.41 1154.39,245.04 1154.99,245.74 1155.59,246.51 1156.19,247.34 1156.79,248.23 1157.38,249.20 1157.98,250.22 1158.58,251.32 1159.18,252.47 1159.78,253.69 1160.38,254.98 1160.98,256.33 1161.58,257.74 1162.18,259.21 1162.78,260.75 1163.38,262.35 1163.97,264.01 1164.57,265.74 1165.17,267.52 1165.77,269.37 1166.37,271.27 1166.97,273.23 1167.57,275.26 1168.17,277.34 1168.77,279.48 1169.37,281.68 1169.96,283.93 1170.56,286.25 1171.16,288.61 1171.76,291.04 1172.36,293.51 1172.96,296.05 1173.56,298.63 1174.16,301.27 1174.76,303.96 1175.36,306.70 1175.95,309.49 1176.55,312.34 1177.15,315.23 1177.75,318.17 1178.35,321.16 1178.95,324.20 1179.55,327.28 1180.15,330.41 1180.75,333.59 1181.35,336.80 1181.94,340.07 1182.54,343.37 1183.14,346.72 1183.74,350.11 1184.34,353.53 1184.94,357.00 1185.54,360.51 1186.14,364.05 1186.74,367.63 1187.34,371.25 1187.93,374.90 1188.53,378.58 1189.13,382.30 1189.73,386.05 1190.33,389.83 1190.93,393.64 1191.53,397.49 1192.13,401.36 1192.73,405.25 1193.32,409.18 1193.92,413.13 1194.52,417.10 1195.12,421.10 1195.72,425.12 1196.32,429.16 1196.92,433.23 1197.52,437.31 1198.12,441.41 1198.72,445.53 1199.32,449.67 1199.91,453.82 1200.51,457.98 1201.11,462.16 1201.71,466.36 1202.31,470.56 1202.91,474.77 1203.51,479.00 1204.11,483.23 1204.71,487.47 1205.30,491.71 1205.90,495.96 1206.50,500.22 1207.10,504.48 1207.70,508.74 1208.30,513.00 1208.90,517.26 1209.50,521.52 1210.10,525.78 1210.70,530.04 1211.30,534.29 1211.89,538.53 1212.49,542.77 1213.09,547.00 1213.69,551.23 1214.29,555.44 1214.89,559.64 1215.49,563.84 1216.09,568.02 1216.69,572.18 1217.28,576.33 1217.88,580.47 1218.48,584.59 1219.08,588.69 1219.68,592.77 1220.28,596.84 1220.88,600.88 1221.48,604.90 1222.08,608.90 1222.68,612.87 1223.27,616.82 1223.87,620.75 1224.47,624.64 1225.07,628.51 1225.67,632.36 1226.27,636.17 1226.87,639.95 1227.47,643.70 1228.07,647.42 1228.67,651.10 1229.27,654.75 1229.86,658.37 1230.46,661.95 1231.06,665.49 1231.66,669.00 1232.26,672.47 1232.86,675.89 1233.46,679.28 1234.06,682.63 1234.66,685.93 1235.25,689.20 1235.85,692.41 1236.45,695.59 1237.05,698.72 1237.65,701.80 1238.25,704.84 1238.85,707.83 1239.45,710.77 1240.05,713.66 1240.65,716.51 1241.25,719.30 1241.84,722.04 1242.44,724.73 1243.04,727.37 1243.64,729.95 1244.24,732.49 1244.84,734.96 1245.44,737.39 1246.04,739.75 1246.64,742.07 1247.23,744.32 1247.83,746.52 1248.43,748.66 1249.03,750.74 1249.63,752.77 1250.23,754.73 1250.83,756.63 1251.43,758.48 1252.03,760.26 1252.63,761.99 1253.22,763.65 1253.82,765.25 1254.42,766.79 1255.02,768.26 1255.62,769.67 1256.22,771.02 1256.82,772.31 1257.42,773.53 1258.02,774.68 1258.62,775.78 1259.22,776.80 1259.81,777.77 1260.41,778.66 1261.01,779.49 1261.61,780.26 1262.21,780.96 1262.81,781.59 1263.41,782.16 1264.01,782.66 1264.61,783.10 1265.20,783.46 1265.80,783.76 1266.40,784.00 1267.00,784.17 1267.60,784.27 1268.20,784.30 1268.80,784.27 1269.40,784.17 1270.00,784.00 1270.60,783.76 1271.19,783.46 1271.79,783.10 1272.39,782.66 1272.99,782.16 1273.59,781.59 1274.19,780.96 1274.79,780.26 1275.39,779.49 1275.99,778.66 1276.59,777.77 1277.18,776.80 1277.78,775.78 1278.38,774.68 1278.98,773.53 1279.58,772.31 1280.18,771.02 1280.78,769.67 1281.38,768.26 1281.98,766.79 1282.58,765.25 1283.17,763.65 1283.77,761.99 1284.37,760.26 1284.97,758.48 1285.57,756.63 1286.17,754.73 1286.77,752.77 1287.37,750.74 1287.97,748.66 1288.57,746.52 1289.16,744.32 1289.76,742.07 1290.36,739.75 1290.96,737.39 1291.56,734.96 1292.16,732.49 1292.76,729.95 1293.36,727.37 1293.96,724.73 1294.56,722.04 1295.15,719.30 1295.75,716.51 1296.35,713.66 1296.95,710.77 1297.55,707.83 1298.15,704.84 1298.75,701.80 1299.35,698.72 1299.95,695.59 1300.55,692.41 1301.14,689.20 1301.74,685.93 1302.34,682.63 1302.94,679.28 1303.54,675.89 1304.14,672.47 1304.74,669.00 1305.34,665.49 1305.94,661.95 1306.54,658.37 1307.13,654.75 1307.73,651.10 1308.33,647.42 1308.93,643.70 1309.53,639.95 1310.13,636.17 1310.73,632.36 1311.33,628.51 1311.93,624.64 1312.53,620.75 1313.12,616.82 1313.72,612.87 1314.32,608.90 1314.92,604.90 1315.52,600.88 1316.12,596.84 1316.72,592.77 1317.32,588.69 1317.92,584.59 1318.52,580.47 1319.12,576.33 1319.71,572.18 1320.31,568.02 1320.91,563.84 1321.51,559.64 1322.11,555.44 1322.71,551.23 1323.31,547.00 1323.91,542.77 1324.51,538.53 1325.11,534.29 1325.70,530.04 1326.30,525.78 1326.90,521.52 1327.50,517.26 1328.10,513.00 1328.70,508.74 1329.30,504.48 1329.90,500.22 1330.50,495.96 1331.10,491.71 1331.69,487.47 1332.29,483.23 1332.89,479.00 1333.49,474.77 1334.09,470.56 1334.69,466.36 1335.29,462.16 1335.89,457.98 1336.49,453.82 1337.08,449.67 1337.68,445.53 1338.28,441.41 1338.88,437.31 1339.48,433.23 1340.08,429.16 1340.68,425.12 1341.28,421.10 1341.88,417.10 1342.48,413.13 1343.08,409.18 1343.67,405.25 1344.27,401.36 1344.87,397.49 1345.47,393.64 1346.07,389.83 1346.67,386.05 1347.27,382.30 1347.87,378.58 1348.47,374.90 1349.07,371.25 1349.66,367.63 1350.26,364.05 1350.86,360.51 1351.46,357.00 1352.06,353.53 1352.66,350.11 1353.26,346.72 1353.86,343.37 1354.46,340.07 1355.05,336.80 1355.65,333.59 1356.25,330.41 1356.85,327.28 1357.45,324.20 1358.05,321.16 1358.65,318.17 1359.25,315.23 1359.85,312.34 1360.45,309.49 1361.05,306.70 1361.64,303.96 1362.24,301.27 1362.84,298.63 1363.44,296.05 1364.04,293.51 1364.64,291.04 1365.24,288.61 1365.84,286.25 1366.44,283.93 1367.03,281.68 1367.63,279.48 1368.23,277.34 1368.83,275.26 1369.43,273.23 1370.03,271.27 1370.63,269.37 1371.23,267.52 1371.83,265.74 1372.43,264.01 1373.02,262.35 1373.62,260.75 1374.22,259.21 1374.82,257.74 1375.42,256.33 1376.02,254.98 1376.62,253.69 1377.22,252.47 1377.82,251.32 1378.42,250.22 1379.02,249.20 1379.61,248.23 1380.21,247.34 1380.81,246.51 1381.41,245.74 1382.01,245.04 1382.61,244.41 1383.21,243.84 1383.81,243.34 1384.41,242.90 1385.00,242.54 1385.60,242.24 1386.20,242.00 1386.80,241.83 1387.40,241.73 1388.00,241.70" fill="none" stroke="#0a2ccc" stroke-width="4" stroke-linejoin="round"/><polyline points="190.00,241.70 190.60,241.77 191.20,241.97 191.80,242.30 192.40,242.77 193.00,243.37 193.59,244.10 194.19,244.97 194.79,245.96 195.39,247.09 195.99,248.34 196.59,249.72 197.19,251.23 197.79,252.86 198.39,254.61 198.99,256.48 199.58,258.48 200.18,260.59 200.78,262.82 201.38,265.16 201.98,267.61 202.58,270.17 203.18,272.83 203.78,275.60 204.38,278.47 204.97,281.43 205.57,284.49 206.17,287.64 206.77,290.88 207.37,294.21 207.97,297.62 208.57,301.10 209.17,304.67 209.77,308.30 210.37,312.00 210.97,315.77 211.56,319.59 212.16,323.48 212.76,327.41 213.36,331.40 213.96,335.43 214.56,339.50 215.16,343.62 215.76,347.76 216.36,351.93 216.95,356.13 217.55,360.35 218.15,364.58 218.75,368.83 219.35,373.09 219.95,377.35 220.55,381.61 221.15,385.87 221.75,390.12 222.35,394.35 222.94,398.57 223.54,402.77 224.14,406.94 224.74,411.08 225.34,415.20 225.94,419.27 226.54,423.30 227.14,427.29 227.74,431.22 228.34,435.11 228.94,438.93 229.53,442.70 230.13,446.40 230.73,450.03 231.33,453.60 231.93,457.08 232.53,460.49 233.13,463.82 233.73,467.06 234.33,470.21 234.93,473.27 235.52,476.23 236.12,479.10 236.72,481.87 237.32,484.53 237.92,487.09 238.52,489.54 239.12,491.88 239.72,494.11 240.32,496.22 240.91,498.22 241.51,500.09 242.11,501.84 242.71,503.47 243.31,504.98 243.91,506.36 244.51,507.61 245.11,508.74 245.71,509.73 246.31,510.60 246.91,511.33 247.50,511.93 248.10,512.40 248.70,512.73 249.30,512.93 249.90,513.00 250.50,512.93 251.10,512.73 251.70,512.40 252.30,511.93 252.90,511.33 253.49,510.60 254.09,509.73 254.69,508.74 255.29,507.61 255.89,506.36 256.49,504.98 257.09,503.47 257.69,501.84 258.29,500.09 258.88,498.22 259.48,496.22 260.08,494.11 260.68,491.88 261.28,489.54 261.88,487.09 262.48,484.53 263.08,481.87 263.68,479.10 264.28,476.23 264.88,473.27 265.47,470.21 266.07,467.06 266.67,463.82 267.27,460.49 267.87,457.08 268.47,453.60 269.07,450.03 269.67,446.40 270.27,442.70 270.87,438.93 271.46,435.11 272.06,431.22 272.66,427.29 273.26,423.30 273.86,419.27 274.46,415.20 275.06,411.08 275.66,406.94 276.26,402.77 276.86,398.57 277.45,394.35 278.05,390.12 278.65,385.87 279.25,381.61 279.85,377.35 280.45,373.09 281.05,368.83 281.65,364.58 282.25,360.35 282.85,356.13 283.44,351.93 284.04,347.76 284.64,343.62 285.24,339.50 285.84,335.43 286.44,331.40 287.04,327.41 287.64,323.48 288.24,319.59 288.83,315.77 289.43,312.00 290.03,308.30 290.63,304.67 291.23,301.10 291.83,297.62 292.43,294.21 293.03,290.88 293.63,287.64 294.23,284.49 294.82,281.43 295.42,278.47 296.02,275.60 296.62,272.83 297.22,270.17 297.82,267.61 298.42,265.16 299.02,262.82 299.62,260.59 300.22,258.48 300.81,256.48 301.41,254.61 302.01,252.86 302.61,251.23 303.21,249.72 303.81,248.34 304.41,247.09 305.01,245.96 305.61,244.97 306.21,244.10 306.81,243.37 307.40,242.77 308.00,242.30 308.60,241.97 309.20,241.77 309.80,241.70 310.40,241.77 311.00,241.97 311.60,242.30 312.20,242.77 312.79,243.37 313.39,244.10 313.99,244.97 314.59,245.96 315.19,247.09 315.79,248.34 316.39,249.72 316.99,251.23 317.59,252.86 318.19,254.61 318.78,256.48 319.38,258.48 319.98,260.59 320.58,262.82 321.18,265.16 321.78,267.61 322.38,270.17 322.98,272.83 323.58,275.60 324.18,278.47 324.77,281.43 325.37,284.49 325.97,287.64 326.57,290.88 327.17,294.21 327.77,297.62 328.37,301.10 328.97,304.67 329.57,308.30 330.17,312.00 330.76,315.77 331.36,319.59 331.96,323.48 332.56,327.41 333.16,331.40 333.76,335.43 334.36,339.50 334.96,343.62 335.56,347.76 336.16,351.93 336.75,356.13 337.35,360.35 337.95,364.58 338.55,368.83 339.15,373.09 339.75,377.35 340.35,381.61 340.95,385.87 341.55,390.12 342.15,394.35 342.75,398.57 343.34,402.77 343.94,406.94 344.54,411.08 345.14,415.20 345.74,419.27 346.34,423.30 346.94,427.29 347.54,431.22 348.14,435.11 348.74,438.93 349.33,442.70 349.93,446.40 350.53,450.03 351.13,453.60 351.73,457.08 352.33,460.49 352.93,463.82 353.53,467.06 354.13,470.21 354.73,473.27 355.32,476.23 355.92,479.10 356.52,481.87 357.12,484.53 357.72,487.09 358.32,489.54 358.92,491.88 359.52,494.11 360.12,496.22 360.72,498.22 361.31,500.09 361.91,501.84 362.51,503.47 363.11,504.98 363.71,506.36 364.31,507.61 364.91,508.74 365.51,509.73 366.11,510.60 366.71,511.33 367.30,511.93 367.90,512.40 368.50,512.73 369.10,512.93 369.70,513.00 370.30,512.93 370.90,512.73 371.50,512.40 372.10,511.93 372.69,511.33 373.29,510.60 373.89,509.73 374.49,508.74 375.09,507.61 375.69,506.36 376.29,504.98 376.89,503.47 377.49,501.84 378.09,500.09 378.69,498.22 379.28,496.22 379.88,494.11 380.48,491.88 381.08,489.54 381.68,487.09 382.28,484.53 382.88,481.87 383.48,479.10 384.08,476.23 384.67,473.27 385.27,470.21 385.87,467.06 386.47,463.82 387.07,460.49 387.67,457.08 388.27,453.60 388.87,450.03 389.47,446.40 390.07,442.70 390.66,438.93 391.26,435.11 391.86,431.22 392.46,427.29 393.06,423.30 393.66,419.27 394.26,415.20 394.86,411.08 395.46,406.94 396.06,402.77 396.65,398.57 397.25,394.35 397.85,390.12 398.45,385.87 399.05,381.61 399.65,377.35 400.25,373.09 400.85,368.83 401.45,364.58 402.05,360.35 402.64,356.13 403.24,351.93 403.84,347.76 404.44,343.62 405.04,339.50 405.64,335.43 406.24,331.40 406.84,327.41 407.44,323.48 408.04,319.59 408.63,315.77 409.23,312.00 409.83,308.30 410.43,304.67 411.03,301.10 411.63,297.62 412.23,294.21 412.83,290.88 413.43,287.64 414.03,284.49 414.62,281.43 415.22,278.47 415.82,275.60 416.42,272.83 417.02,270.17 417.62,267.61 418.22,265.16 418.82,262.82 419.42,260.59 420.02,258.48 420.62,256.48 421.21,254.61 421.81,252.86 422.41,251.23 423.01,249.72 423.61,248.34 424.21,247.09 424.81,245.96 425.41,244.97 426.01,244.10 426.61,243.37 427.20,242.77 427.80,242.30 428.40,241.97 429.00,241.77 429.60,241.70 430.20,241.77 430.80,241.97 431.40,242.30 432.00,242.77 432.59,243.37 433.19,244.10 433.79,244.97 434.39,245.96 434.99,247.09 435.59,248.34 436.19,249.72 436.79,251.23 437.39,252.86 437.99,254.61 438.59,256.48 439.18,258.48 439.78,260.59 440.38,262.82 440.98,265.16 441.58,267.61 442.18,270.17 442.78,272.83 443.38,275.60 443.98,278.47 444.57,281.43 445.17,284.49 445.77,287.64 446.37,290.88 446.97,294.21 447.57,297.62 448.17,301.10 448.77,304.67 449.37,308.30 449.97,312.00 450.56,315.77 451.16,319.59 451.76,323.48 452.36,327.41 452.96,331.40 453.56,335.43 454.16,339.50 454.76,343.62 455.36,347.76 455.96,351.93 456.56,356.13 457.15,360.35 457.75,364.58 458.35,368.83 458.95,373.09 459.55,377.35 460.15,381.61 460.75,385.87 461.35,390.12 461.95,394.35 462.54,398.57 463.14,402.77 463.74,406.94 464.34,411.08 464.94,415.20 465.54,419.27 466.14,423.30 466.74,427.29 467.34,431.22 467.94,435.11 468.54,438.93 469.13,442.70 469.73,446.40 470.33,450.03 470.93,453.60 471.53,457.08 472.13,460.49 472.73,463.82 473.33,467.06 473.93,470.21 474.52,473.27 475.12,476.23 475.72,479.10 476.32,481.87 476.92,484.53 477.52,487.09 478.12,489.54 478.72,491.88 479.32,494.11 479.92,496.22 480.51,498.22 481.11,500.09 481.71,501.84 482.31,503.47 482.91,504.98 483.51,506.36 484.11,507.61 484.71,508.74 485.31,509.73 485.91,510.60 486.50,511.33 487.10,511.93 487.70,512.40 488.30,512.73 488.90,512.93 489.50,513.00 490.10,512.93 490.70,512.73 491.30,512.40 491.90,511.93 492.50,511.33 493.09,510.60 493.69,509.73 494.29,508.74 494.89,507.61 495.49,506.36 496.09,504.98 496.69,503.47 497.29,501.84 497.89,500.09 498.49,498.22 499.08,496.22 499.68,494.11 500.28,491.88 500.88,489.54 501.48,487.09 502.08,484.53 502.68,481.87 503.28,479.10 503.88,476.23 504.47,473.27 505.07,470.21 505.67,467.06 506.27,463.82 506.87,460.49 507.47,457.08 508.07,453.60 508.67,450.03 509.27,446.40 509.87,442.70 510.46,438.93 511.06,435.11 511.66,431.22 512.26,427.29 512.86,423.30 513.46,419.27 514.06,415.20 514.66,411.08 515.26,406.94 515.86,402.77 516.45,398.57 517.05,394.35 517.65,390.12 518.25,385.87 518.85,381.61 519.45,377.35 520.05,373.09 520.65,368.83 521.25,364.58 521.85,360.35 522.44,356.13 523.04,351.93 523.64,347.76 524.24,343.62 524.84,339.50 525.44,335.43 526.04,331.40 526.64,327.41 527.24,323.48 527.84,319.59 528.43,315.77 529.03,312.00 529.63,308.30 530.23,304.67 530.83,301.10 531.43,297.62 532.03,294.21 532.63,290.88 533.23,287.64 533.83,284.49 534.42,281.43 535.02,278.47 535.62,275.60 536.22,272.83 536.82,270.17 537.42,267.61 538.02,265.16 538.62,262.82 539.22,260.59 539.82,258.48 540.41,256.48 541.01,254.61 541.61,252.86 542.21,251.23 542.81,249.72 543.41,248.34 544.01,247.09 544.61,245.96 545.21,244.97 545.81,244.10 546.40,243.37 547.00,242.77 547.60,242.30 548.20,241.97 548.80,241.77 549.40,241.70 550.00,241.77 550.60,241.97 551.20,242.30 551.80,242.77 552.39,243.37 552.99,244.10 553.59,244.97 554.19,245.96 554.79,247.09 555.39,248.34 555.99,249.72 556.59,251.23 557.19,252.86 557.79,254.61 558.38,256.48 558.98,258.48 559.58,260.59 560.18,262.82 560.78,265.16 561.38,267.61 561.98,270.17 562.58,272.83 563.18,275.60 563.78,278.47 564.38,281.43 564.97,284.49 565.57,287.64 566.17,290.88 566.77,294.21 567.37,297.62 567.97,301.10 568.57,304.67 569.17,308.30 569.77,312.00 570.37,315.77 570.96,319.59 571.56,323.48 572.16,327.41 572.76,331.40 573.36,335.43 573.96,339.50 574.56,343.62 575.16,347.76 575.76,351.93 576.36,356.13 576.95,360.35 577.55,364.58 578.15,368.83 578.75,373.09 579.35,377.35 579.95,381.61 580.55,385.87 581.15,390.12 581.75,394.35 582.35,398.57 582.94,402.77 583.54,406.94 584.14,411.08 584.74,415.20 585.34,419.27 585.94,423.30 586.54,427.29 587.14,431.22 587.74,435.11 588.34,438.93 588.93,442.70 589.53,446.40 590.13,450.03 590.73,453.60 591.33,457.08 591.93,460.49 592.53,463.82 593.13,467.06 593.73,470.21 594.33,473.27 594.92,476.23 595.52,479.10 596.12,481.87 596.72,484.53 597.32,487.09 597.92,489.54 598.52,491.88 599.12,494.11 599.72,496.22 600.31,498.22 600.91,500.09 601.51,501.84 602.11,503.47 602.71,504.98 603.31,506.36 603.91,507.61 604.51,508.74 605.11,509.73 605.71,510.60 606.31,511.33 606.90,511.93 607.50,512.40 608.10,512.73 608.70,512.93 609.30,513.00 609.90,512.93 610.50,512.73 611.10,512.40 611.70,511.93 612.29,511.33 612.89,510.60 613.49,509.73 614.09,508.74 614.69,507.61 615.29,506.36 615.89,504.98 616.49,503.47 617.09,501.84 617.69,500.09 618.29,498.22 618.88,496.22 619.48,494.11 620.08,491.88 620.68,489.54 621.28,487.09 621.88,484.53 622.48,481.87 623.08,479.10 623.68,476.23 624.27,473.27 624.87,470.21 625.47,467.06 626.07,463.82 626.67,460.49 627.27,457.08 627.87,453.60 628.47,450.03 629.07,446.40 629.67,442.70 630.26,438.93 630.86,435.11 631.46,431.22 632.06,427.29 632.66,423.30 633.26,419.27 633.86,415.20 634.46,411.08 635.06,406.94 635.66,402.77 636.25,398.57 636.85,394.35 637.45,390.12 638.05,385.87 638.65,381.61 639.25,377.35 639.85,373.09 640.45,368.83 641.05,364.58 641.65,360.35 642.25,356.13 642.84,351.93 643.44,347.76 644.04,343.62 644.64,339.50 645.24,335.43 645.84,331.40 646.44,327.41 647.04,323.48 647.64,319.59 648.24,315.77 648.83,312.00 649.43,308.30 650.03,304.67 650.63,301.10 651.23,297.62 651.83,294.21 652.43,290.88 653.03,287.64 653.63,284.49 654.22,281.43 654.82,278.47 655.42,275.60 656.02,272.83 656.62,270.17 657.22,267.61 657.82,265.16 658.42,262.82 659.02,260.59 659.62,258.48 660.21,256.48 660.81,254.61 661.41,252.86 662.01,251.23 662.61,249.72 663.21,248.34 663.81,247.09 664.41,245.96 665.01,244.97 665.61,244.10 666.20,243.37 666.80,242.77 667.40,242.30 668.00,241.97 668.60,241.77 669.20,241.70 669.80,241.77 670.40,241.97 671.00,242.30 671.60,242.77 672.20,243.37 672.79,244.10 673.39,244.97 673.99,245.96 674.59,247.09 675.19,248.34 675.79,249.72 676.39,251.23 676.99,252.86 677.59,254.61 678.18,256.48 678.78,258.48 679.38,260.59 679.98,262.82 680.58,265.16 681.18,267.61 681.78,270.17 682.38,272.83 682.98,275.60 683.58,278.47 684.17,281.43 684.77,284.49 685.37,287.64 685.97,290.88 686.57,294.21 687.17,297.62 687.77,301.10 688.37,304.67 688.97,308.30 689.57,312.00 690.16,315.77 690.76,319.59 691.36,323.48 691.96,327.41 692.56,331.40 693.16,335.43 693.76,339.50 694.36,343.62 694.96,347.76 695.56,351.93 696.15,356.13 696.75,360.35 697.35,364.58 697.95,368.83 698.55,373.09 699.15,377.35 699.75,381.61 700.35,385.87 700.95,390.12 701.55,394.35 702.14,398.57 702.74,402.77 703.34,406.94 703.94,411.08 704.54,415.20 705.14,419.27 705.74,423.30 706.34,427.29 706.94,431.22 707.54,435.11 708.13,438.93 708.73,442.70 709.33,446.40 709.93,450.03 710.53,453.60 711.13,457.08 711.73,460.49 712.33,463.82 712.93,467.06 713.53,470.21 714.12,473.27 714.72,476.23 715.32,479.10 715.92,481.87 716.52,484.53 717.12,487.09 717.72,489.54 718.32,491.88 718.92,494.11 719.52,496.22 720.12,498.22 720.71,500.09 721.31,501.84 721.91,503.47 722.51,504.98 723.11,506.36 723.71,507.61 724.31,508.74 724.91,509.73 725.51,510.60 726.10,511.33 726.70,511.93 727.30,512.40 727.90,512.73 728.50,512.93 729.10,513.00 729.70,512.93 730.30,512.73 730.90,512.40 731.50,511.93 732.10,511.33 732.69,510.60 733.29,509.73 733.89,508.74 734.49,507.61 735.09,506.36 735.69,504.98 736.29,503.47 736.89,501.84 737.49,500.09 738.09,498.22 738.68,496.22 739.28,494.11 739.88,491.88 740.48,489.54 741.08,487.09 741.68,484.53 742.28,481.87 742.88,479.10 743.48,476.23 744.07,473.27 744.67,470.21 745.27,467.06 745.87,463.82 746.47,460.49 747.07,457.08 747.67,453.60 748.27,450.03 748.87,446.40 749.47,442.70 750.06,438.93 750.66,435.11 751.26,431.22 751.86,427.29 752.46,423.30 753.06,419.27 753.66,415.20 754.26,411.08 754.86,406.94 755.46,402.77 756.05,398.57 756.65,394.35 757.25,390.12 757.85,385.87 758.45,381.61 759.05,377.35 759.65,373.09 760.25,368.83 760.85,364.58 761.45,360.35 762.05,356.13 762.64,351.93 763.24,347.76 763.84,343.62 764.44,339.50 765.04,335.43 765.64,331.40 766.24,327.41 766.84,323.48 767.44,319.59 768.03,315.77 768.63,312.00 769.23,308.30 769.83,304.67 770.43,301.10 771.03,297.62 771.63,294.21 772.23,290.88 772.83,287.64 773.43,284.49 774.02,281.43 774.62,278.47 775.22,275.60 775.82,272.83 776.42,270.17 777.02,267.61 777.62,265.16 778.22,262.82 778.82,260.59 779.42,258.48 780.01,256.48 780.61,254.61 781.21,252.86 781.81,251.23 782.41,249.72 783.01,248.34 783.61,247.09 784.21,245.96 784.81,244.97 785.41,244.10 786.00,243.37 786.60,242.77 787.20,242.30 787.80,241.97 788.40,241.77 789.00,241.70 789.60,241.77 790.20,241.97 790.80,242.30 791.40,242.77 792.00,243.37 792.59,244.10 793.19,244.97 793.79,245.96 794.39,247.09 794.99,248.34 795.59,249.72 796.19,251.23 796.79,252.86 797.39,254.61 797.99,256.48 798.58,258.48 799.18,260.59 799.78,262.82 800.38,265.16 800.98,267.61 801.58,270.17 802.18,272.83 802.78,275.60 803.38,278.47 803.98,281.43 804.57,284.49 805.17,287.64 805.77,290.88 806.37,294.21 806.97,297.62 807.57,301.10 808.17,304.67 808.77,308.30 809.37,312.00 809.96,315.77 810.56,319.59 811.16,323.48 811.76,327.41 812.36,331.40 812.96,335.43 813.56,339.50 814.16,343.62 814.76,347.76 815.36,351.93 815.95,356.13 816.55,360.35 817.15,364.58 817.75,368.83 818.35,373.09 818.95,377.35 819.55,381.61 820.15,385.87 820.75,390.12 821.35,394.35 821.95,398.57 822.54,402.77 823.14,406.94 823.74,411.08 824.34,415.20 824.94,419.27 825.54,423.30 826.14,427.29 826.74,431.22 827.34,435.11 827.94,438.93 828.53,442.70 829.13,446.40 829.73,450.03 830.33,453.60 830.93,457.08 831.53,460.49 832.13,463.82 832.73,467.06 833.33,470.21 833.92,473.27 834.52,476.23 835.12,479.10 835.72,481.87 836.32,484.53 836.92,487.09 837.52,489.54 838.12,491.88 838.72,494.11 839.32,496.22 839.91,498.22 840.51,500.09 841.11,501.84 841.71,503.47 842.31,504.98 842.91,506.36 843.51,507.61 844.11,508.74 844.71,509.73 845.31,510.60 845.90,511.33 846.50,511.93 847.10,512.40 847.70,512.73 848.30,512.93 848.90,513.00 849.50,512.93 850.10,512.73 850.70,512.40 851.30,511.93 851.89,511.33 852.49,510.60 853.09,509.73 853.69,508.74 854.29,507.61 854.89,506.36 855.49,504.98 856.09,503.47 856.69,501.84 857.29,500.09 857.88,498.22 858.48,496.22 859.08,494.11 859.68,491.88 860.28,489.54 860.88,487.09 861.48,484.53 862.08,481.87 862.68,479.10 863.28,476.23 863.88,473.27 864.47,470.21 865.07,467.06 865.67,463.82 866.27,460.49 866.87,457.08 867.47,453.60 868.07,450.03 868.67,446.40 869.27,442.70 869.87,438.93 870.46,435.11 871.06,431.22 871.66,427.29 872.26,423.30 872.86,419.27 873.46,415.20 874.06,411.08 874.66,406.94 875.26,402.77 875.85,398.57 876.45,394.35 877.05,390.12 877.65,385.87 878.25,381.61 878.85,377.35 879.45,373.09 880.05,368.83 880.65,364.58 881.25,360.35 881.85,356.13 882.44,351.93 883.04,347.76 883.64,343.62 884.24,339.50 884.84,335.43 885.44,331.40 886.04,327.41 886.64,323.48 887.24,319.59 887.84,315.77 888.43,312.00 889.03,308.30 889.63,304.67 890.23,301.10 890.83,297.62 891.43,294.21 892.03,290.88 892.63,287.64 893.23,284.49 893.82,281.43 894.42,278.47 895.02,275.60 895.62,272.83 896.22,270.17 896.82,267.61 897.42,265.16 898.02,262.82 898.62,260.59 899.22,258.48 899.81,256.48 900.41,254.61 901.01,252.86 901.61,251.23 902.21,249.72 902.81,248.34 903.41,247.09 904.01,245.96 904.61,244.97 905.21,244.10 905.80,243.37 906.40,242.77 907.00,242.30 907.60,241.97 908.20,241.77 908.80,241.70 909.40,241.77 910.00,241.97 910.60,242.30 911.20,242.77 911.80,243.37 912.39,244.10 912.99,244.97 913.59,245.96 914.19,247.09 914.79,248.34 915.39,249.72 915.99,251.23 916.59,252.86 917.19,254.61 917.78,256.48 918.38,258.48 918.98,260.59 919.58,262.82 920.18,265.16 920.78,267.61 921.38,270.17 921.98,272.83 922.58,275.60 923.18,278.47 923.77,281.43 924.37,284.49 924.97,287.64 925.57,290.88 926.17,294.21 926.77,297.62 927.37,301.10 927.97,304.67 928.57,308.30 929.17,312.00 929.76,315.77 930.36,319.59 930.96,323.48 931.56,327.41 932.16,331.40 932.76,335.43 933.36,339.50 933.96,343.62 934.56,347.76 935.16,351.93 935.75,356.13 936.35,360.35 936.95,364.58 937.55,368.83 938.15,373.09 938.75,377.35 939.35,381.61 939.95,385.87 940.55,390.12 941.15,394.35 941.75,398.57 942.34,402.77 942.94,406.94 943.54,411.08 944.14,415.20 944.74,419.27 945.34,423.30 945.94,427.29 946.54,431.22 947.14,435.11 947.74,438.93 948.33,442.70 948.93,446.40 949.53,450.03 950.13,453.60 950.73,457.08 951.33,460.49 951.93,463.82 952.53,467.06 953.13,470.21 953.73,473.27 954.32,476.23 954.92,479.10 955.52,481.87 956.12,484.53 956.72,487.09 957.32,489.54 957.92,491.88 958.52,494.11 959.12,496.22 959.71,498.22 960.31,500.09 960.91,501.84 961.51,503.47 962.11,504.98 962.71,506.36 963.31,507.61 963.91,508.74 964.51,509.73 965.11,510.60 965.70,511.33 966.30,511.93 966.90,512.40 967.50,512.73 968.10,512.93 968.70,513.00 969.30,512.93 969.90,512.73 970.50,512.40 971.10,511.93 971.70,511.33 972.29,510.60 972.89,509.73 973.49,508.74 974.09,507.61 974.69,506.36 975.29,504.98 975.89,503.47 976.49,501.84 977.09,500.09 977.69,498.22 978.28,496.22 978.88,494.11 979.48,491.88 980.08,489.54 980.68,487.09 981.28,484.53 981.88,481.87 982.48,479.10 983.08,476.23 983.67,473.27 984.27,470.21 984.87,467.06 985.47,463.82 986.07,460.49 986.67,457.08 987.27,453.60 987.87,450.03 988.47,446.40 989.07,442.70 989.66,438.93 990.26,435.11 990.86,431.22 991.46,427.29 992.06,423.30 992.66,419.27 993.26,415.20 993.86,411.08 994.46,406.94 995.06,402.77 995.65,398.57 996.25,394.35 996.85,390.12 997.45,385.87 998.05,381.61 998.65,377.35 999.25,373.09 999.85,368.83 1000.45,364.58 1001.05,360.35 1001.64,356.13 1002.24,351.93 1002.84,347.76 1003.44,343.62 1004.04,339.50 1004.64,335.43 1005.24,331.40 1005.84,327.41 1006.44,323.48 1007.04,319.59 1007.63,315.77 1008.23,312.00 1008.83,308.30 1009.43,304.67 1010.03,301.10 1010.63,297.62 1011.23,294.21 1011.83,290.88 1012.43,287.64 1013.03,284.49 1013.62,281.43 1014.22,278.47 1014.82,275.60 1015.42,272.83 1016.02,270.17 1016.62,267.61 1017.22,265.16 1017.82,262.82 1018.42,260.59 1019.02,258.48 1019.62,256.48 1020.21,254.61 1020.81,252.86 1021.41,251.23 1022.01,249.72 1022.61,248.34 1023.21,247.09 1023.81,245.96 1024.41,244.97 1025.01,244.10 1025.61,243.37 1026.20,242.77 1026.80,242.30 1027.40,241.97 1028.00,241.77 1028.60,241.70 1029.20,241.77 1029.80,241.97 1030.40,242.30 1031.00,242.77 1031.60,243.37 1032.19,244.10 1032.79,244.97 1033.39,245.96 1033.99,247.09 1034.59,248.34 1035.19,249.72 1035.79,251.23 1036.39,252.86 1036.99,254.61 1037.59,256.48 1038.18,258.48 1038.78,260.59 1039.38,262.82 1039.98,265.16 1040.58,267.61 1041.18,270.17 1041.78,272.83 1042.38,275.60 1042.98,278.47 1043.57,281.43 1044.17,284.49 1044.77,287.64 1045.37,290.88 1045.97,294.21 1046.57,297.62 1047.17,301.10 1047.77,304.67 1048.37,308.30 1048.97,312.00 1049.57,315.77 1050.16,319.59 1050.76,323.48 1051.36,327.41 1051.96,331.40 1052.56,335.43 1053.16,339.50 1053.76,343.62 1054.36,347.76 1054.96,351.93 1055.55,356.13 1056.15,360.35 1056.75,364.58 1057.35,368.83 1057.95,373.09 1058.55,377.35 1059.15,381.61 1059.75,385.87 1060.35,390.12 1060.95,394.35 1061.55,398.57 1062.14,402.77 1062.74,406.94 1063.34,411.08 1063.94,415.20 1064.54,419.27 1065.14,423.30 1065.74,427.29 1066.34,431.22 1066.94,435.11 1067.53,438.93 1068.13,442.70 1068.73,446.40 1069.33,450.03 1069.93,453.60 1070.53,457.08 1071.13,460.49 1071.73,463.82 1072.33,467.06 1072.93,470.21 1073.53,473.27 1074.12,476.23 1074.72,479.10 1075.32,481.87 1075.92,484.53 1076.52,487.09 1077.12,489.54 1077.72,491.88 1078.32,494.11 1078.92,496.22 1079.51,498.22 1080.11,500.09 1080.71,501.84 1081.31,503.47 1081.91,504.98 1082.51,506.36 1083.11,507.61 1083.71,508.74 1084.31,509.73 1084.91,510.60 1085.50,511.33 1086.10,511.93 1086.70,512.40 1087.30,512.73 1087.90,512.93 1088.50,513.00 1089.10,512.93 1089.70,512.73 1090.30,512.40 1090.90,511.93 1091.49,511.33 1092.09,510.60 1092.69,509.73 1093.29,508.74 1093.89,507.61 1094.49,506.36 1095.09,504.98 1095.69,503.47 1096.29,501.84 1096.89,500.09 1097.49,498.22 1098.08,496.22 1098.68,494.11 1099.28,491.88 1099.88,489.54 1100.48,487.09 1101.08,484.53 1101.68,481.87 1102.28,479.10 1102.88,476.23 1103.47,473.27 1104.07,470.21 1104.67,467.06 1105.27,463.82 1105.87,460.49 1106.47,457.08 1107.07,453.60 1107.67,450.03 1108.27,446.40 1108.87,442.70 1109.46,438.93 1110.06,435.11 1110.66,431.22 1111.26,427.29 1111.86,423.30 1112.46,419.27 1113.06,415.20 1113.66,411.08 1114.26,406.94 1114.86,402.77 1115.45,398.57 1116.05,394.35 1116.65,390.12 1117.25,385.87 1117.85,381.61 1118.45,377.35 1119.05,373.09 1119.65,368.83 1120.25,364.58 1120.85,360.35 1121.45,356.13 1122.04,351.93 1122.64,347.76 1123.24,343.62 1123.84,339.50 1124.44,335.43 1125.04,331.40 1125.64,327.41 1126.24,323.48 1126.84,319.59 1127.43,315.77 1128.03,312.00 1128.63,308.30 1129.23,304.67 1129.83,301.10 1130.43,297.62 1131.03,294.21 1131.63,290.88 1132.23,287.64 1132.83,284.49 1133.42,281.43 1134.02,278.47 1134.62,275.60 1135.22,272.83 1135.82,270.17 1136.42,267.61 1137.02,265.16 1137.62,262.82 1138.22,260.59 1138.82,258.48 1139.41,256.48 1140.01,254.61 1140.61,252.86 1141.21,251.23 1141.81,249.72 1142.41,248.34 1143.01,247.09 1143.61,245.96 1144.21,244.97 1144.81,244.10 1145.40,243.37 1146.00,242.77 1146.60,242.30 1147.20,241.97 1147.80,241.77 1148.40,241.70 1149.00,241.77 1149.60,241.97 1150.20,242.30 1150.80,242.77 1151.39,243.37 1151.99,244.10 1152.59,244.97 1153.19,245.96 1153.79,247.09 1154.39,248.34 1154.99,249.72 1155.59,251.23 1156.19,252.86 1156.79,254.61 1157.38,256.48 1157.98,258.48 1158.58,260.59 1159.18,262.82 1159.78,265.16 1160.38,267.61 1160.98,270.17 1161.58,272.83 1162.18,275.60 1162.78,278.47 1163.38,281.43 1163.97,284.49 1164.57,287.64 1165.17,290.88 1165.77,294.21 1166.37,297.62 1166.97,301.10 1167.57,304.67 1168.17,308.30 1168.77,312.00 1169.37,315.77 1169.96,319.59 1170.56,323.48 1171.16,327.41 1171.76,331.40 1172.36,335.43 1172.96,339.50 1173.56,343.62 1174.16,347.76 1174.76,351.93 1175.36,356.13 1175.95,360.35 1176.55,364.58 1177.15,368.83 1177.75,373.09 1178.35,377.35 1178.95,381.61 1179.55,385.87 1180.15,390.12 1180.75,394.35 1181.35,398.57 1181.94,402.77 1182.54,406.94 1183.14,411.08 1183.74,415.20 1184.34,419.27 1184.94,423.30 1185.54,427.29 1186.14,431.22 1186.74,435.11 1187.34,438.93 1187.93,442.70 1188.53,446.40 1189.13,450.03 1189.73,453.60 1190.33,457.08 1190.93,460.49 1191.53,463.82 1192.13,467.06 1192.73,470.21 1193.32,473.27 1193.92,476.23 1194.52,479.10 1195.12,481.87 1195.72,484.53 1196.32,487.09 1196.92,489.54 1197.52,491.88 1198.12,494.11 1198.72,496.22 1199.32,498.22 1199.91,500.09 1200.51,501.84 1201.11,503.47 1201.71,504.98 1202.31,506.36 1202.91,507.61 1203.51,508.74 1204.11,509.73 1204.71,510.60 1205.30,511.33 1205.90,511.93 1206.50,512.40 1207.10,512.73 1207.70,512.93 1208.30,513.00 1208.90,512.93 1209.50,512.73 1210.10,512.40 1210.70,511.93 1211.30,511.33 1211.89,510.60 1212.49,509.73 1213.09,508.74 1213.69,507.61 1214.29,506.36 1214.89,504.98 1215.49,503.47 1216.09,501.84 1216.69,500.09 1217.28,498.22 1217.88,496.22 1218.48,494.11 1219.08,491.88 1219.68,489.54 1220.28,487.09 1220.88,484.53 1221.48,481.87 1222.08,479.10 1222.68,476.23 1223.27,473.27 1223.87,470.21 1224.47,467.06 1225.07,463.82 1225.67,460.49 1226.27,457.08 1226.87,453.60 1227.47,450.03 1228.07,446.40 1228.67,442.70 1229.27,438.93 1229.86,435.11 1230.46,431.22 1231.06,427.29 1231.66,423.30 1232.26,419.27 1232.86,415.20 1233.46,411.08 1234.06,406.94 1234.66,402.77 1235.25,398.57 1235.85,394.35 1236.45,390.12 1237.05,385.87 1237.65,381.61 1238.25,377.35 1238.85,373.09 1239.45,368.83 1240.05,364.58 1240.65,360.35 1241.25,356.13 1241.84,351.93 1242.44,347.76 1243.04,343.62 1243.64,339.50 1244.24,335.43 1244.84,331.40 1245.44,327.41 1246.04,323.48 1246.64,319.59 1247.23,315.77 1247.83,312.00 1248.43,308.30 1249.03,304.67 1249.63,301.10 1250.23,297.62 1250.83,294.21 1251.43,290.88 1252.03,287.64 1252.63,284.49 1253.22,281.43 1253.82,278.47 1254.42,275.60 1255.02,272.83 1255.62,270.17 1256.22,267.61 1256.82,265.16 1257.42,262.82 1258.02,260.59 1258.62,258.48 1259.22,256.48 1259.81,254.61 1260.41,252.86 1261.01,251.23 1261.61,249.72 1262.21,248.34 1262.81,247.09 1263.41,245.96 1264.01,244.97 1264.61,244.10 1265.20,243.37 1265.80,242.77 1266.40,242.30 1267.00,241.97 1267.60,241.77 1268.20,241.70 1268.80,241.77 1269.40,241.97 1270.00,242.30 1270.60,242.77 1271.19,243.37 1271.79,244.10 1272.39,244.97 1272.99,245.96 1273.59,247.09 1274.19,248.34 1274.79,249.72 1275.39,251.23 1275.99,252.86 1276.59,254.61 1277.18,256.48 1277.78,258.48 1278.38,260.59 1278.98,262.82 1279.58,265.16 1280.18,267.61 1280.78,270.17 1281.38,272.83 1281.98,275.60 1282.58,278.47 1283.17,281.43 1283.77,284.49 1284.37,287.64 1284.97,290.88 1285.57,294.21 1286.17,297.62 1286.77,301.10 1287.37,304.67 1287.97,308.30 1288.57,312.00 1289.16,315.77 1289.76,319.59 1290.36,323.48 1290.96,327.41 1291.56,331.40 1292.16,335.43 1292.76,339.50 1293.36,343.62 1293.96,347.76 1294.56,351.93 1295.15,356.13 1295.75,360.35 1296.35,364.58 1296.95,368.83 1297.55,373.09 1298.15,377.35 1298.75,381.61 1299.35,385.87 1299.95,390.12 1300.55,394.35 1301.14,398.57 1301.74,402.77 1302.34,406.94 1302.94,411.08 1303.54,415.20 1304.14,419.27 1304.74,423.30 1305.34,427.29 1305.94,431.22 1306.54,435.11 1307.13,438.93 1307.73,442.70 1308.33,446.40 1308.93,450.03 1309.53,453.60 1310.13,457.08 1310.73,460.49 1311.33,463.82 1311.93,467.06 1312.53,470.21 1313.12,473.27 1313.72,476.23 1314.32,479.10 1314.92,481.87 1315.52,484.53 1316.12,487.09 1316.72,489.54 1317.32,491.88 1317.92,494.11 1318.52,496.22 1319.12,498.22 1319.71,500.09 1320.31,501.84 1320.91,503.47 1321.51,504.98 1322.11,506.36 1322.71,507.61 1323.31,508.74 1323.91,509.73 1324.51,510.60 1325.11,511.33 1325.70,511.93 1326.30,512.40 1326.90,512.73 1327.50,512.93 1328.10,513.00 1328.70,512.93 1329.30,512.73 1329.90,512.40 1330.50,511.93 1331.10,511.33 1331.69,510.60 1332.29,509.73 1332.89,508.74 1333.49,507.61 1334.09,506.36 1334.69,504.98 1335.29,503.47 1335.89,501.84 1336.49,500.09 1337.08,498.22 1337.68,496.22 1338.28,494.11 1338.88,491.88 1339.48,489.54 1340.08,487.09 1340.68,484.53 1341.28,481.87 1341.88,479.10 1342.48,476.23 1343.08,473.27 1343.67,470.21 1344.27,467.06 1344.87,463.82 1345.47,460.49 1346.07,457.08 1346.67,453.60 1347.27,450.03 1347.87,446.40 1348.47,442.70 1349.07,438.93 1349.66,435.11 1350.26,431.22 1350.86,427.29 1351.46,423.30 1352.06,419.27 1352.66,415.20 1353.26,411.08 1353.86,406.94 1354.46,402.77 1355.05,398.57 1355.65,394.35 1356.25,390.12 1356.85,385.87 1357.45,381.61 1358.05,377.35 1358.65,373.09 1359.25,368.83 1359.85,364.58 1360.45,360.35 1361.05,356.13 1361.64,351.93 1362.24,347.76 1362.84,343.62 1363.44,339.50 1364.04,335.43 1364.64,331.40 1365.24,327.41 1365.84,323.48 1366.44,319.59 1367.03,315.77 1367.63,312.00 1368.23,308.30 1368.83,304.67 1369.43,301.10 1370.03,297.62 1370.63,294.21 1371.23,290.88 1371.83,287.64 1372.43,284.49 1373.02,281.43 1373.62,278.47 1374.22,275.60 1374.82,272.83 1375.42,270.17 1376.02,267.61 1376.62,265.16 1377.22,262.82 1377.82,260.59 1378.42,258.48 1379.02,256.48 1379.61,254.61 1380.21,252.86 1380.81,251.23 1381.41,249.72 1382.01,248.34 1382.61,247.09 1383.21,245.96 1383.81,244.97 1384.41,244.10 1385.00,243.37 1385.60,242.77 1386.20,242.30 1386.80,241.97 1387.40,241.77 1388.00,241.70" fill="none" stroke="#000" stroke-width="4" stroke-dasharray="4 3.5"/><circle cx="190.5" cy="242" r="18.2" fill="none" stroke="#006b00" stroke-width="3.4"/></svg>
<div class="t" style="top:227.34px;font-size:27.00px;font-family:'Liberation Sans',sans-serif;color:#000;left:107.32px;">1.0</div>
<div class="t" style="top:362.99px;font-size:27.00px;font-family:'Liberation Sans',sans-serif;color:#000;left:107.40px;">0.5</div>
<div class="t" style="top:498.64px;font-size:27.00px;font-family:'Liberation Sans',sans-serif;color:#000;left:107.32px;">0.0</div>
<div class="t" style="top:634.29px;font-size:27.00px;font-family:'Liberation Sans',sans-serif;color:#000;left:98.41px;">-0.5</div>
<div class="t" style="top:769.94px;font-size:27.00px;font-family:'Liberation Sans',sans-serif;color:#000;left:98.33px;">-1.0</div>
<div class="t" style="top:831.34px;font-size:27.00px;font-family:'Liberation Sans',sans-serif;color:#000;left:182.49px;">0</div>
<div class="t" style="top:831.34px;font-size:27.00px;font-family:'Liberation Sans',sans-serif;color:#000;left:473.98px;">10</div>
<div class="t" style="top:831.34px;font-size:27.00px;font-family:'Liberation Sans',sans-serif;color:#000;left:773.83px;">20</div>
<div class="t" style="top:831.34px;font-size:27.00px;font-family:'Liberation Sans',sans-serif;color:#000;left:1073.50px;">30</div>
<div class="t" style="top:831.34px;font-size:27.00px;font-family:'Liberation Sans',sans-serif;color:#000;left:1373.20px;">40</div>
<div class="t" style="top:864.25px;font-size:36.56px;font-family:'Liberation Sans',sans-serif;color:#000;left:724.00px;">Position</div>
<div class="t" style="left:79px;top:513px;font-size:35px;transform:rotate(-90deg);transform-origin:0 0"><div style="position:relative;left:-50%"></div></div>
<div class="a" style="left:48px;top:941px;width:24px;height:24px;background:linear-gradient(#258cff,#0072fe);border-radius:5px"></div>
<svg style="left:48px;top:941px" width="24" height="24" viewBox="0 0 24 24"><path d="M5 12.4 L10.4 17.9 L18.4 5.9" fill="none" stroke="#fff" stroke-width="3.3" stroke-linecap="round" stroke-linejoin="round"/></svg>
<div class="t" style="top:934.07px;font-size:35.60px;font-family:'Liberation Sans',sans-serif;color:#000;left:80.78px;">Response</div>
<div class="t" style="top:940.50px;font-size:28.00px;font-family:'Liberation Sans',sans-serif;color:#000;letter-spacing:1.011px;left:271.00px;">Medium</div>
<div class="a" style="left:382px;top:936px;width:237px;height:32px;background:#fff;border-radius:8px;box-shadow:0 0.5px 2px rgba(0,0,0,0.35)"></div>
<div class="a" style="left:592px;top:940px;width:24px;height:24px;background:linear-gradient(#3a95fd,#1a78f5);border-radius:6px"></div>
<svg style="left:592px;top:940px" width="24" height="24" viewBox="0 0 24 24"><path d="M7.5 9.4 L12 5 L16.6 9.4 M7.5 14.6 L12 19.1 L16.6 14.6" fill="none" stroke="#fff" stroke-width="2.3" stroke-linecap="round" stroke-linejoin="round"/></svg>
<div class="t" style="top:935.81px;font-size:28.70px;font-family:'Liberation Sans',sans-serif;color:#000;letter-spacing:0.137px;left:678.20px;">separation x k</div>
<div class="a" style="left:871.7px;top:931.3px;width:74.29999999999995px;height:35.0px;background:#fff;box-shadow:0 1px 1px rgba(0,0,0,0.30),0 0 0 0.5px rgba(0,0,0,0.12)"></div>
<div class="t" style="top:934.79px;font-size:29.91px;font-family:'Liberation Sans',sans-serif;color:#000;left:876.43px;">0.7</div>
<div class="a" style="left:951px;top:928.7px;width:26px;height:40.299999999999955px;background:#fff;border-radius:12px;box-shadow:0 0 0 1px rgba(0,0,0,0.10),0 1px 1.5px rgba(0,0,0,0.2)"></div>
<svg style="left:951px;top:928.7px" width="26" height="41" viewBox="0 0 26 41"><rect x="0.5" y="19.8" width="25" height="2" fill="#e2e2e2"/><path d="M6.6 14.2 L13.1 7.4 L19.5 14.2 M6.6 27.6 L13.1 34.2 L19.5 27.6" fill="none" stroke="#1e1e1e" stroke-width="2.8" stroke-linecap="round" stroke-linejoin="round"/></svg>
<div class="a" style="left:54px;top:1000px;width:1412px;height:704px;background:#fff"></div>
<svg style="left:0;top:0" width="2142" height="1752" viewBox="0 0 2142 1752"><path d="M167 1029.8 V1605 H1380" fill="none" stroke="#000" stroke-width="2.2"/><path d="M152 1029.8 H167" stroke="#000" stroke-width="2.2"/><path d="M152 1167.8 H167" stroke="#000" stroke-width="2.2"/><path d="M152 1305.8 H167" stroke="#000" stroke-width="2.2"/><path d="M152 1443.8 H167" stroke="#000" stroke-width="2.2"/><path d="M152 1581.8 H167" stroke="#000" stroke-width="2.2"/><path d="M190.0 1605 V1621.8" stroke="#000" stroke-width="2.2"/><path d="M487.5 1605 V1621.8" stroke="#000" stroke-width="2.2"/><path d="M785.0 1605 V1621.8" stroke="#000" stroke-width="2.2"/><path d="M1082.5 1605 V1621.8" stroke="#000" stroke-width="2.2"/><path d="M1380.0 1605 V1621.8" stroke="#000" stroke-width="2.2"/><polyline points="190.00,1029.80 190.59,1029.83 191.19,1029.94 191.78,1030.11 192.38,1030.34 192.97,1030.65 193.57,1031.02 194.16,1031.47 194.76,1031.98 195.35,1032.55 195.95,1033.20 196.54,1033.91 197.14,1034.69 197.74,1035.53 198.33,1036.45 198.93,1037.43 199.52,1038.47 200.12,1039.58 200.71,1040.76 201.31,1042.00 201.90,1043.31 202.50,1044.68 203.09,1046.12 203.69,1047.62 204.28,1049.18 204.88,1050.81 205.47,1052.50 206.06,1054.25 206.66,1056.07 207.25,1057.94 207.85,1059.88 208.44,1061.88 209.04,1063.94 209.63,1066.06 210.23,1068.24 210.82,1070.47 211.42,1072.77 212.01,1075.12 212.61,1077.53 213.21,1079.99 213.80,1082.51 214.40,1085.09 214.99,1087.72 215.59,1090.40 216.18,1093.14 216.78,1095.93 217.37,1098.77 217.97,1101.66 218.56,1104.60 219.16,1107.60 219.75,1110.64 220.34,1113.73 220.94,1116.86 221.53,1120.05 222.13,1123.28 222.72,1126.55 223.32,1129.87 223.91,1133.23 224.51,1136.64 225.10,1140.08 225.70,1143.57 226.30,1147.10 226.89,1150.66 227.49,1154.27 228.08,1157.91 228.68,1161.59 229.27,1165.30 229.87,1169.05 230.46,1172.84 231.06,1176.65 231.65,1180.50 232.25,1184.38 232.84,1188.28 233.44,1192.22 234.03,1196.19 234.62,1200.18 235.22,1204.20 235.81,1208.24 236.41,1212.31 237.00,1216.40 237.60,1220.51 238.19,1224.64 238.79,1228.80 239.38,1232.97 239.98,1237.16 240.57,1241.37 241.17,1245.59 241.76,1249.83 242.36,1254.08 242.95,1258.35 243.55,1262.62 244.15,1266.91 244.74,1271.21 245.34,1275.51 245.93,1279.83 246.53,1284.15 247.12,1288.47 247.72,1292.80 248.31,1297.13 248.91,1301.46 249.50,1305.80 250.09,1310.14 250.69,1314.47 251.28,1318.80 251.88,1323.13 252.47,1327.45 253.07,1331.77 253.67,1336.09 254.26,1340.39 254.86,1344.69 255.45,1348.98 256.05,1353.25 256.64,1357.52 257.24,1361.77 257.83,1366.01 258.43,1370.23 259.02,1374.44 259.62,1378.63 260.21,1382.80 260.81,1386.96 261.40,1391.09 262.00,1395.20 262.59,1399.29 263.19,1403.36 263.78,1407.40 264.38,1411.42 264.97,1415.41 265.56,1419.38 266.16,1423.32 266.75,1427.22 267.35,1431.10 267.94,1434.95 268.54,1438.76 269.13,1442.55 269.73,1446.30 270.32,1450.01 270.92,1453.69 271.51,1457.33 272.11,1460.94 272.70,1464.50 273.30,1468.03 273.89,1471.52 274.49,1474.96 275.08,1478.37 275.68,1481.73 276.27,1485.05 276.87,1488.32 277.47,1491.55 278.06,1494.74 278.65,1497.87 279.25,1500.96 279.85,1504.00 280.44,1507.00 281.03,1509.94 281.63,1512.83 282.23,1515.67 282.82,1518.46 283.42,1521.20 284.01,1523.88 284.61,1526.51 285.20,1529.09 285.80,1531.61 286.39,1534.07 286.99,1536.48 287.58,1538.83 288.18,1541.13 288.77,1543.36 289.37,1545.54 289.96,1547.66 290.56,1549.72 291.15,1551.72 291.75,1553.66 292.34,1555.53 292.94,1557.35 293.53,1559.10 294.12,1560.79 294.72,1562.42 295.31,1563.98 295.91,1565.48 296.50,1566.92 297.10,1568.29 297.69,1569.60 298.29,1570.84 298.88,1572.02 299.48,1573.13 300.07,1574.17 300.67,1575.15 301.26,1576.07 301.86,1576.91 302.45,1577.69 303.05,1578.40 303.64,1579.05 304.24,1579.62 304.83,1580.13 305.43,1580.58 306.02,1580.95 306.62,1581.26 307.22,1581.49 307.81,1581.66 308.40,1581.77 309.00,1581.80 309.59,1581.77 310.19,1581.66 310.78,1581.49 311.38,1581.26 311.98,1580.95 312.57,1580.58 313.16,1580.13 313.76,1579.62 314.36,1579.05 314.95,1578.40 315.54,1577.69 316.14,1576.91 316.74,1576.07 317.33,1575.15 317.93,1574.17 318.52,1573.13 319.12,1572.02 319.71,1570.84 320.31,1569.60 320.90,1568.29 321.50,1566.92 322.09,1565.48 322.69,1563.98 323.28,1562.42 323.88,1560.79 324.47,1559.10 325.06,1557.35 325.66,1555.53 326.25,1553.66 326.85,1551.72 327.44,1549.72 328.04,1547.66 328.63,1545.54 329.23,1543.36 329.83,1541.13 330.42,1538.83 331.01,1536.48 331.61,1534.07 332.21,1531.61 332.80,1529.09 333.39,1526.51 333.99,1523.88 334.59,1521.20 335.18,1518.46 335.77,1515.67 336.37,1512.83 336.97,1509.94 337.56,1507.00 338.15,1504.00 338.75,1500.96 339.35,1497.87 339.94,1494.74 340.53,1491.55 341.13,1488.32 341.73,1485.05 342.32,1481.73 342.91,1478.37 343.51,1474.96 344.11,1471.52 344.70,1468.03 345.29,1464.50 345.89,1460.94 346.49,1457.33 347.08,1453.69 347.67,1450.01 348.27,1446.30 348.87,1442.55 349.46,1438.76 350.06,1434.95 350.65,1431.10 351.25,1427.22 351.84,1423.32 352.44,1419.38 353.03,1415.41 353.62,1411.42 354.22,1407.40 354.81,1403.36 355.41,1399.29 356.00,1395.20 356.60,1391.09 357.19,1386.96 357.79,1382.80 358.38,1378.63 358.98,1374.44 359.58,1370.23 360.17,1366.01 360.76,1361.77 361.36,1357.52 361.96,1353.25 362.55,1348.98 363.14,1344.69 363.74,1340.39 364.34,1336.09 364.93,1331.77 365.52,1327.45 366.12,1323.13 366.72,1318.80 367.31,1314.47 367.90,1310.14 368.50,1305.80 369.10,1301.46 369.69,1297.13 370.28,1292.80 370.88,1288.47 371.48,1284.15 372.07,1279.83 372.66,1275.51 373.26,1271.21 373.86,1266.91 374.45,1262.62 375.04,1258.35 375.64,1254.08 376.24,1249.83 376.83,1245.59 377.42,1241.37 378.02,1237.16 378.62,1232.97 379.21,1228.80 379.81,1224.64 380.40,1220.51 381.00,1216.40 381.59,1212.31 382.19,1208.24 382.78,1204.20 383.38,1200.18 383.97,1196.19 384.56,1192.22 385.16,1188.28 385.75,1184.38 386.35,1180.50 386.94,1176.65 387.54,1172.84 388.13,1169.05 388.73,1165.30 389.33,1161.59 389.92,1157.91 390.51,1154.27 391.11,1150.66 391.71,1147.10 392.30,1143.57 392.89,1140.08 393.49,1136.64 394.09,1133.23 394.68,1129.87 395.27,1126.55 395.87,1123.28 396.47,1120.05 397.06,1116.86 397.65,1113.73 398.25,1110.64 398.85,1107.60 399.44,1104.60 400.03,1101.66 400.63,1098.77 401.23,1095.93 401.82,1093.14 402.41,1090.40 403.01,1087.72 403.61,1085.09 404.20,1082.51 404.79,1079.99 405.39,1077.53 405.99,1075.12 406.58,1072.77 407.17,1070.47 407.77,1068.24 408.37,1066.06 408.96,1063.94 409.56,1061.88 410.15,1059.88 410.75,1057.94 411.34,1056.07 411.94,1054.25 412.53,1052.50 413.12,1050.81 413.72,1049.18 414.31,1047.62 414.91,1046.12 415.50,1044.68 416.10,1043.31 416.69,1042.00 417.29,1040.76 417.88,1039.58 418.48,1038.47 419.08,1037.43 419.67,1036.45 420.26,1035.53 420.86,1034.69 421.46,1033.91 422.05,1033.20 422.64,1032.55 423.24,1031.98 423.84,1031.47 424.43,1031.02 425.02,1030.65 425.62,1030.34 426.22,1030.11 426.81,1029.94 427.40,1029.83 428.00,1029.80 428.60,1029.83 429.19,1029.94 429.79,1030.11 430.38,1030.34 430.98,1030.65 431.57,1031.02 432.17,1031.47 432.76,1031.98 433.36,1032.55 433.95,1033.20 434.55,1033.91 435.14,1034.69 435.74,1035.53 436.33,1036.45 436.93,1037.43 437.52,1038.47 438.12,1039.58 438.71,1040.76 439.31,1042.00 439.90,1043.31 440.50,1044.68 441.09,1046.12 441.69,1047.62 442.28,1049.18 442.88,1050.81 443.47,1052.50 444.06,1054.25 444.66,1056.07 445.25,1057.94 445.85,1059.88 446.44,1061.88 447.04,1063.94 447.63,1066.06 448.23,1068.24 448.82,1070.47 449.42,1072.77 450.01,1075.12 450.61,1077.53 451.20,1079.99 451.80,1082.51 452.39,1085.09 452.99,1087.72 453.58,1090.40 454.18,1093.14 454.78,1095.93 455.37,1098.77 455.96,1101.66 456.56,1104.60 457.16,1107.60 457.75,1110.64 458.34,1113.73 458.94,1116.86 459.54,1120.05 460.13,1123.28 460.72,1126.55 461.32,1129.87 461.92,1133.23 462.51,1136.64 463.11,1140.08 463.70,1143.57 464.30,1147.10 464.89,1150.66 465.49,1154.27 466.08,1157.91 466.68,1161.59 467.27,1165.30 467.87,1169.05 468.46,1172.84 469.06,1176.65 469.65,1180.50 470.25,1184.38 470.84,1188.28 471.44,1192.22 472.03,1196.19 472.62,1200.18 473.22,1204.20 473.81,1208.24 474.41,1212.31 475.00,1216.40 475.60,1220.51 476.19,1224.64 476.79,1228.80 477.38,1232.97 477.98,1237.16 478.57,1241.37 479.17,1245.59 479.76,1249.83 480.36,1254.08 480.95,1258.35 481.55,1262.62 482.14,1266.91 482.74,1271.21 483.33,1275.51 483.93,1279.83 484.53,1284.15 485.12,1288.47 485.71,1292.80 486.31,1297.13 486.91,1301.46 487.50,1305.80 488.09,1310.14 488.69,1314.47 489.29,1318.80 489.88,1323.13 490.47,1327.45 491.07,1331.77 491.67,1336.09 492.26,1340.39 492.86,1344.69 493.45,1348.98 494.05,1353.25 494.64,1357.52 495.24,1361.77 495.83,1366.01 496.43,1370.23 497.02,1374.44 497.62,1378.63 498.21,1382.80 498.81,1386.96 499.40,1391.09 500.00,1395.20 500.59,1399.29 501.19,1403.36 501.78,1407.40 502.38,1411.42 502.97,1415.41 503.56,1419.38 504.16,1423.32 504.75,1427.22 505.35,1431.10 505.94,1434.95 506.54,1438.76 507.13,1442.55 507.73,1446.30 508.32,1450.01 508.92,1453.69 509.51,1457.33 510.11,1460.94 510.70,1464.50 511.30,1468.03 511.89,1471.52 512.49,1474.96 513.09,1478.37 513.68,1481.73 514.28,1485.05 514.87,1488.32 515.46,1491.55 516.06,1494.74 516.65,1497.87 517.25,1500.96 517.85,1504.00 518.44,1507.00 519.04,1509.94 519.63,1512.83 520.22,1515.67 520.82,1518.46 521.41,1521.20 522.01,1523.88 522.61,1526.51 523.20,1529.09 523.80,1531.61 524.39,1534.07 524.99,1536.48 525.58,1538.83 526.17,1541.13 526.77,1543.36 527.37,1545.54 527.96,1547.66 528.56,1549.72 529.15,1551.72 529.75,1553.66 530.34,1555.53 530.93,1557.35 531.53,1559.10 532.12,1560.79 532.72,1562.42 533.32,1563.98 533.91,1565.48 534.50,1566.92 535.10,1568.29 535.69,1569.60 536.29,1570.84 536.88,1572.02 537.48,1573.13 538.08,1574.17 538.67,1575.15 539.26,1576.07 539.86,1576.91 540.45,1577.69 541.05,1578.40 541.64,1579.05 542.24,1579.62 542.84,1580.13 543.43,1580.58 544.03,1580.95 544.62,1581.26 545.21,1581.49 545.81,1581.66 546.40,1581.77 547.00,1581.80 547.60,1581.77 548.19,1581.66 548.79,1581.49 549.38,1581.26 549.97,1580.95 550.57,1580.58 551.16,1580.13 551.76,1579.62 552.36,1579.05 552.95,1578.40 553.55,1577.69 554.14,1576.91 554.74,1576.07 555.33,1575.15 555.92,1574.17 556.52,1573.13 557.12,1572.02 557.71,1570.84 558.31,1569.60 558.90,1568.29 559.50,1566.92 560.09,1565.48 560.68,1563.98 561.28,1562.42 561.88,1560.79 562.47,1559.10 563.07,1557.35 563.66,1555.53 564.25,1553.66 564.85,1551.72 565.44,1549.72 566.04,1547.66 566.63,1545.54 567.23,1543.36 567.83,1541.13 568.42,1538.83 569.01,1536.48 569.61,1534.07 570.20,1531.61 570.80,1529.09 571.39,1526.51 571.99,1523.88 572.59,1521.20 573.18,1518.46 573.78,1515.67 574.37,1512.83 574.96,1509.94 575.56,1507.00 576.15,1504.00 576.75,1500.96 577.35,1497.87 577.94,1494.74 578.54,1491.55 579.13,1488.32 579.72,1485.05 580.32,1481.73 580.91,1478.37 581.51,1474.96 582.11,1471.52 582.70,1468.03 583.30,1464.50 583.89,1460.94 584.49,1457.33 585.08,1453.69 585.67,1450.01 586.27,1446.30 586.87,1442.55 587.46,1438.76 588.06,1434.95 588.65,1431.10 589.25,1427.22 589.84,1423.32 590.43,1419.38 591.03,1415.41 591.62,1411.42 592.22,1407.40 592.82,1403.36 593.41,1399.29 594.00,1395.20 594.60,1391.09 595.19,1386.96 595.79,1382.80 596.38,1378.63 596.98,1374.44 597.58,1370.23 598.17,1366.01 598.76,1361.77 599.36,1357.52 599.95,1353.25 600.55,1348.98 601.14,1344.69 601.74,1340.39 602.34,1336.09 602.93,1331.77 603.53,1327.45 604.12,1323.13 604.71,1318.80 605.31,1314.47 605.90,1310.14 606.50,1305.80 607.10,1301.46 607.69,1297.13 608.29,1292.80 608.88,1288.47 609.47,1284.15 610.07,1279.83 610.66,1275.51 611.26,1271.21 611.86,1266.91 612.45,1262.62 613.05,1258.35 613.64,1254.08 614.24,1249.83 614.83,1245.59 615.42,1241.37 616.02,1237.16 616.62,1232.97 617.21,1228.80 617.81,1224.64 618.40,1220.51 619.00,1216.40 619.59,1212.31 620.18,1208.24 620.78,1204.20 621.38,1200.18 621.97,1196.19 622.57,1192.22 623.16,1188.28 623.75,1184.38 624.35,1180.50 624.94,1176.65 625.54,1172.84 626.13,1169.05 626.73,1165.30 627.33,1161.59 627.92,1157.91 628.51,1154.27 629.11,1150.66 629.70,1147.10 630.30,1143.57 630.89,1140.08 631.49,1136.64 632.09,1133.23 632.68,1129.87 633.28,1126.55 633.87,1123.28 634.46,1120.05 635.06,1116.86 635.65,1113.73 636.25,1110.64 636.85,1107.60 637.44,1104.60 638.04,1101.66 638.63,1098.77 639.22,1095.93 639.82,1093.14 640.41,1090.40 641.01,1087.72 641.61,1085.09 642.20,1082.51 642.80,1079.99 643.39,1077.53 643.99,1075.12 644.58,1072.77 645.17,1070.47 645.77,1068.24 646.37,1066.06 646.96,1063.94 647.56,1061.88 648.15,1059.88 648.75,1057.94 649.34,1056.07 649.93,1054.25 650.53,1052.50 651.12,1050.81 651.72,1049.18 652.32,1047.62 652.91,1046.12 653.50,1044.68 654.10,1043.31 654.69,1042.00 655.29,1040.76 655.88,1039.58 656.48,1038.47 657.08,1037.43 657.67,1036.45 658.26,1035.53 658.86,1034.69 659.45,1033.91 660.05,1033.20 660.64,1032.55 661.24,1031.98 661.84,1031.47 662.43,1031.02 663.03,1030.65 663.62,1030.34 664.21,1030.11 664.81,1029.94 665.40,1029.83 666.00,1029.80 666.60,1029.83 667.19,1029.94 667.78,1030.11 668.38,1030.34 668.98,1030.65 669.57,1031.02 670.16,1031.47 670.76,1031.98 671.36,1032.55 671.95,1033.20 672.54,1033.91 673.14,1034.69 673.74,1035.53 674.33,1036.45 674.92,1037.43 675.52,1038.47 676.12,1039.58 676.71,1040.76 677.30,1042.00 677.90,1043.31 678.50,1044.68 679.09,1046.12 679.68,1047.62 680.28,1049.18 680.88,1050.81 681.47,1052.50 682.07,1054.25 682.66,1056.07 683.25,1057.94 683.85,1059.88 684.45,1061.88 685.04,1063.94 685.63,1066.06 686.23,1068.24 686.83,1070.47 687.42,1072.77 688.01,1075.12 688.61,1077.53 689.21,1079.99 689.80,1082.51 690.39,1085.09 690.99,1087.72 691.59,1090.40 692.18,1093.14 692.77,1095.93 693.37,1098.77 693.97,1101.66 694.56,1104.60 695.15,1107.60 695.75,1110.64 696.35,1113.73 696.94,1116.86 697.53,1120.05 698.13,1123.28 698.73,1126.55 699.32,1129.87 699.91,1133.23 700.51,1136.64 701.11,1140.08 701.70,1143.57 702.29,1147.10 702.89,1150.66 703.49,1154.27 704.08,1157.91 704.68,1161.59 705.27,1165.30 705.87,1169.05 706.46,1172.84 707.05,1176.65 707.65,1180.50 708.25,1184.38 708.84,1188.28 709.44,1192.22 710.03,1196.19 710.62,1200.18 711.22,1204.20 711.81,1208.24 712.41,1212.31 713.00,1216.40 713.60,1220.51 714.20,1224.64 714.79,1228.80 715.38,1232.97 715.98,1237.16 716.57,1241.37 717.17,1245.59 717.76,1249.83 718.36,1254.08 718.96,1258.35 719.55,1262.62 720.14,1266.91 720.74,1271.21 721.34,1275.51 721.93,1279.83 722.52,1284.15 723.12,1288.47 723.72,1292.80 724.31,1297.13 724.90,1301.46 725.50,1305.80 726.10,1310.14 726.69,1314.47 727.28,1318.80 727.88,1323.13 728.48,1327.45 729.07,1331.77 729.66,1336.09 730.26,1340.39 730.86,1344.69 731.45,1348.98 732.04,1353.25 732.64,1357.52 733.24,1361.77 733.83,1366.01 734.43,1370.23 735.02,1374.44 735.62,1378.63 736.21,1382.80 736.80,1386.96 737.40,1391.09 738.00,1395.20 738.59,1399.29 739.19,1403.36 739.78,1407.40 740.38,1411.42 740.97,1415.41 741.56,1419.38 742.16,1423.32 742.75,1427.22 743.35,1431.10 743.95,1434.95 744.54,1438.76 745.13,1442.55 745.73,1446.30 746.32,1450.01 746.92,1453.69 747.51,1457.33 748.11,1460.94 748.71,1464.50 749.30,1468.03 749.89,1471.52 750.49,1474.96 751.09,1478.37 751.68,1481.73 752.27,1485.05 752.87,1488.32 753.47,1491.55 754.06,1494.74 754.65,1497.87 755.25,1500.96 755.85,1504.00 756.44,1507.00 757.03,1509.94 757.63,1512.83 758.23,1515.67 758.82,1518.46 759.41,1521.20 760.01,1523.88 760.61,1526.51 761.20,1529.09 761.79,1531.61 762.39,1534.07 762.99,1536.48 763.58,1538.83 764.18,1541.13 764.77,1543.36 765.37,1545.54 765.96,1547.66 766.55,1549.72 767.15,1551.72 767.75,1553.66 768.34,1555.53 768.94,1557.35 769.53,1559.10 770.12,1560.79 770.72,1562.42 771.31,1563.98 771.91,1565.48 772.50,1566.92 773.10,1568.29 773.70,1569.60 774.29,1570.84 774.88,1572.02 775.48,1573.13 776.07,1574.17 776.67,1575.15 777.26,1576.07 777.86,1576.91 778.46,1577.69 779.05,1578.40 779.64,1579.05 780.24,1579.62 780.84,1580.13 781.43,1580.58 782.02,1580.95 782.62,1581.26 783.22,1581.49 783.81,1581.66 784.40,1581.77 785.00,1581.80 785.60,1581.77 786.19,1581.66 786.78,1581.49 787.38,1581.26 787.98,1580.95 788.57,1580.58 789.16,1580.13 789.76,1579.62 790.36,1579.05 790.95,1578.40 791.54,1577.69 792.14,1576.91 792.74,1576.07 793.33,1575.15 793.93,1574.17 794.52,1573.13 795.12,1572.02 795.71,1570.84 796.30,1569.60 796.90,1568.29 797.50,1566.92 798.09,1565.48 798.69,1563.98 799.28,1562.42 799.88,1560.79 800.47,1559.10 801.06,1557.35 801.66,1555.53 802.25,1553.66 802.85,1551.72 803.45,1549.72 804.04,1547.66 804.63,1545.54 805.23,1543.36 805.82,1541.13 806.42,1538.83 807.01,1536.48 807.61,1534.07 808.21,1531.61 808.80,1529.09 809.39,1526.51 809.99,1523.88 810.59,1521.20 811.18,1518.46 811.77,1515.67 812.37,1512.83 812.97,1509.94 813.56,1507.00 814.15,1504.00 814.75,1500.96 815.35,1497.87 815.94,1494.74 816.53,1491.55 817.13,1488.32 817.73,1485.05 818.32,1481.73 818.91,1478.37 819.51,1474.96 820.11,1471.52 820.70,1468.03 821.29,1464.50 821.89,1460.94 822.49,1457.33 823.08,1453.69 823.68,1450.01 824.27,1446.30 824.87,1442.55 825.46,1438.76 826.05,1434.95 826.65,1431.10 827.25,1427.22 827.84,1423.32 828.44,1419.38 829.03,1415.41 829.62,1411.42 830.22,1407.40 830.81,1403.36 831.41,1399.29 832.00,1395.20 832.60,1391.09 833.20,1386.96 833.79,1382.80 834.38,1378.63 834.98,1374.44 835.57,1370.23 836.17,1366.01 836.76,1361.77 837.36,1357.52 837.96,1353.25 838.55,1348.98 839.14,1344.69 839.74,1340.39 840.34,1336.09 840.93,1331.77 841.52,1327.45 842.12,1323.13 842.72,1318.80 843.31,1314.47 843.90,1310.14 844.50,1305.80 845.10,1301.46 845.69,1297.13 846.28,1292.80 846.88,1288.47 847.48,1284.15 848.07,1279.83 848.66,1275.51 849.26,1271.21 849.86,1266.91 850.45,1262.62 851.04,1258.35 851.64,1254.08 852.24,1249.83 852.83,1245.59 853.43,1241.37 854.02,1237.16 854.62,1232.97 855.21,1228.80 855.80,1224.64 856.40,1220.51 857.00,1216.40 857.59,1212.31 858.19,1208.24 858.78,1204.20 859.38,1200.18 859.97,1196.19 860.56,1192.22 861.16,1188.28 861.75,1184.38 862.35,1180.50 862.95,1176.65 863.54,1172.84 864.13,1169.05 864.73,1165.30 865.32,1161.59 865.92,1157.91 866.51,1154.27 867.11,1150.66 867.71,1147.10 868.30,1143.57 868.89,1140.08 869.49,1136.64 870.09,1133.23 870.68,1129.87 871.27,1126.55 871.87,1123.28 872.47,1120.05 873.06,1116.86 873.65,1113.73 874.25,1110.64 874.85,1107.60 875.44,1104.60 876.03,1101.66 876.63,1098.77 877.23,1095.93 877.82,1093.14 878.41,1090.40 879.01,1087.72 879.61,1085.09 880.20,1082.51 880.79,1079.99 881.39,1077.53 881.99,1075.12 882.58,1072.77 883.18,1070.47 883.77,1068.24 884.37,1066.06 884.96,1063.94 885.55,1061.88 886.15,1059.88 886.75,1057.94 887.34,1056.07 887.94,1054.25 888.53,1052.50 889.12,1050.81 889.72,1049.18 890.31,1047.62 890.91,1046.12 891.50,1044.68 892.10,1043.31 892.70,1042.00 893.29,1040.76 893.88,1039.58 894.48,1038.47 895.07,1037.43 895.67,1036.45 896.26,1035.53 896.86,1034.69 897.46,1033.91 898.05,1033.20 898.64,1032.55 899.24,1031.98 899.84,1031.47 900.43,1031.02 901.02,1030.65 901.62,1030.34 902.22,1030.11 902.81,1029.94 903.40,1029.83 904.00,1029.80 904.60,1029.83 905.19,1029.94 905.78,1030.11 906.38,1030.34 906.98,1030.65 907.57,1031.02 908.16,1031.47 908.76,1031.98 909.36,1032.55 909.95,1033.20 910.54,1033.91 911.14,1034.69 911.74,1035.53 912.33,1036.45 912.93,1037.43 913.52,1038.47 914.12,1039.58 914.71,1040.76 915.30,1042.00 915.90,1043.31 916.50,1044.68 917.09,1046.12 917.69,1047.62 918.28,1049.18 918.88,1050.81 919.47,1052.50 920.06,1054.25 920.66,1056.07 921.25,1057.94 921.85,1059.88 922.45,1061.88 923.04,1063.94 923.63,1066.06 924.23,1068.24 924.82,1070.47 925.42,1072.77 926.01,1075.12 926.61,1077.53 927.21,1079.99 927.80,1082.51 928.39,1085.09 928.99,1087.72 929.59,1090.40 930.18,1093.14 930.77,1095.93 931.37,1098.77 931.97,1101.66 932.56,1104.60 933.15,1107.60 933.75,1110.64 934.35,1113.73 934.94,1116.86 935.53,1120.05 936.13,1123.28 936.73,1126.55 937.32,1129.87 937.91,1133.23 938.51,1136.64 939.11,1140.08 939.70,1143.57 940.29,1147.10 940.89,1150.66 941.49,1154.27 942.08,1157.91 942.68,1161.59 943.27,1165.30 943.87,1169.05 944.46,1172.84 945.05,1176.65 945.65,1180.50 946.25,1184.38 946.84,1188.28 947.44,1192.22 948.03,1196.19 948.62,1200.18 949.22,1204.20 949.81,1208.24 950.41,1212.31 951.00,1216.40 951.60,1220.51 952.20,1224.64 952.79,1228.80 953.38,1232.97 953.98,1237.16 954.57,1241.37 955.17,1245.59 955.76,1249.83 956.36,1254.08 956.96,1258.35 957.55,1262.62 958.14,1266.91 958.74,1271.21 959.34,1275.51 959.93,1279.83 960.52,1284.15 961.12,1288.47 961.72,1292.80 962.31,1297.13 962.90,1301.46 963.50,1305.80 964.10,1310.14 964.69,1314.47 965.28,1318.80 965.88,1323.13 966.48,1327.45 967.07,1331.77 967.66,1336.09 968.26,1340.39 968.86,1344.69 969.45,1348.98 970.04,1353.25 970.64,1357.52 971.24,1361.77 971.83,1366.01 972.43,1370.23 973.02,1374.44 973.62,1378.63 974.21,1382.80 974.80,1386.96 975.40,1391.09 976.00,1395.20 976.59,1399.29 977.19,1403.36 977.78,1407.40 978.38,1411.42 978.97,1415.41 979.56,1419.38 980.16,1423.32 980.75,1427.22 981.35,1431.10 981.95,1434.95 982.54,1438.76 983.13,1442.55 983.73,1446.30 984.32,1450.01 984.92,1453.69 985.51,1457.33 986.11,1460.94 986.71,1464.50 987.30,1468.03 987.89,1471.52 988.49,1474.96 989.09,1478.37 989.68,1481.73 990.27,1485.05 990.87,1488.32 991.47,1491.55 992.06,1494.74 992.65,1497.87 993.25,1500.96 993.85,1504.00 994.44,1507.00 995.03,1509.94 995.63,1512.83 996.23,1515.67 996.82,1518.46 997.41,1521.20 998.01,1523.88 998.61,1526.51 999.20,1529.09 999.79,1531.61 1000.39,1534.07 1000.99,1536.48 1001.58,1538.83 1002.18,1541.13 1002.77,1543.36 1003.37,1545.54 1003.96,1547.66 1004.55,1549.72 1005.15,1551.72 1005.75,1553.66 1006.34,1555.53 1006.94,1557.35 1007.53,1559.10 1008.12,1560.79 1008.72,1562.42 1009.31,1563.98 1009.91,1565.48 1010.50,1566.92 1011.10,1568.29 1011.70,1569.60 1012.29,1570.84 1012.88,1572.02 1013.48,1573.13 1014.07,1574.17 1014.67,1575.15 1015.26,1576.07 1015.86,1576.91 1016.46,1577.69 1017.05,1578.40 1017.64,1579.05 1018.24,1579.62 1018.84,1580.13 1019.43,1580.58 1020.02,1580.95 1020.62,1581.26 1021.22,1581.49 1021.81,1581.66 1022.40,1581.77 1023.00,1581.80 1023.60,1581.77 1024.19,1581.66 1024.78,1581.49 1025.38,1581.26 1025.97,1580.95 1026.57,1580.58 1027.16,1580.13 1027.76,1579.62 1028.36,1579.05 1028.95,1578.40 1029.55,1577.69 1030.14,1576.91 1030.74,1576.07 1031.33,1575.15 1031.93,1574.17 1032.52,1573.13 1033.12,1572.02 1033.71,1570.84 1034.30,1569.60 1034.90,1568.29 1035.49,1566.92 1036.09,1565.48 1036.68,1563.98 1037.28,1562.42 1037.88,1560.79 1038.47,1559.10 1039.07,1557.35 1039.66,1555.53 1040.26,1553.66 1040.85,1551.72 1041.45,1549.72 1042.04,1547.66 1042.63,1545.54 1043.23,1543.36 1043.82,1541.13 1044.42,1538.83 1045.01,1536.48 1045.61,1534.07 1046.20,1531.61 1046.80,1529.09 1047.39,1526.51 1047.99,1523.88 1048.59,1521.20 1049.18,1518.46 1049.78,1515.67 1050.37,1512.83 1050.97,1509.94 1051.56,1507.00 1052.15,1504.00 1052.75,1500.96 1053.35,1497.87 1053.94,1494.74 1054.53,1491.55 1055.13,1488.32 1055.72,1485.05 1056.32,1481.73 1056.91,1478.37 1057.51,1474.96 1058.11,1471.52 1058.70,1468.03 1059.30,1464.50 1059.89,1460.94 1060.49,1457.33 1061.08,1453.69 1061.68,1450.01 1062.27,1446.30 1062.87,1442.55 1063.46,1438.76 1064.05,1434.95 1064.65,1431.10 1065.24,1427.22 1065.84,1423.32 1066.43,1419.38 1067.03,1415.41 1067.62,1411.42 1068.22,1407.40 1068.82,1403.36 1069.41,1399.29 1070.01,1395.20 1070.60,1391.09 1071.20,1386.96 1071.79,1382.80 1072.38,1378.63 1072.98,1374.44 1073.57,1370.23 1074.17,1366.01 1074.76,1361.77 1075.36,1357.52 1075.95,1353.25 1076.55,1348.98 1077.14,1344.69 1077.74,1340.39 1078.34,1336.09 1078.93,1331.77 1079.53,1327.45 1080.12,1323.13 1080.72,1318.80 1081.31,1314.47 1081.90,1310.14 1082.50,1305.80 1083.10,1301.46 1083.69,1297.13 1084.28,1292.80 1084.88,1288.47 1085.47,1284.15 1086.07,1279.83 1086.66,1275.51 1087.26,1271.21 1087.86,1266.91 1088.45,1262.62 1089.05,1258.35 1089.64,1254.08 1090.24,1249.83 1090.83,1245.59 1091.43,1241.37 1092.02,1237.16 1092.62,1232.97 1093.21,1228.80 1093.80,1224.64 1094.40,1220.51 1094.99,1216.40 1095.59,1212.31 1096.18,1208.24 1096.78,1204.20 1097.38,1200.18 1097.97,1196.19 1098.57,1192.22 1099.16,1188.28 1099.76,1184.38 1100.35,1180.50 1100.95,1176.65 1101.54,1172.84 1102.13,1169.05 1102.73,1165.30 1103.32,1161.59 1103.92,1157.91 1104.51,1154.27 1105.11,1150.66 1105.70,1147.10 1106.30,1143.57 1106.89,1140.08 1107.49,1136.64 1108.09,1133.23 1108.68,1129.87 1109.28,1126.55 1109.87,1123.28 1110.47,1120.05 1111.06,1116.86 1111.65,1113.73 1112.25,1110.64 1112.85,1107.60 1113.44,1104.60 1114.03,1101.66 1114.63,1098.77 1115.22,1095.93 1115.82,1093.14 1116.41,1090.40 1117.01,1087.72 1117.61,1085.09 1118.20,1082.51 1118.80,1079.99 1119.39,1077.53 1119.99,1075.12 1120.58,1072.77 1121.18,1070.47 1121.77,1068.24 1122.37,1066.06 1122.96,1063.94 1123.55,1061.88 1124.15,1059.88 1124.74,1057.94 1125.34,1056.07 1125.93,1054.25 1126.53,1052.50 1127.12,1050.81 1127.72,1049.18 1128.32,1047.62 1128.91,1046.12 1129.51,1044.68 1130.10,1043.31 1130.70,1042.00 1131.29,1040.76 1131.88,1039.58 1132.48,1038.47 1133.07,1037.43 1133.67,1036.45 1134.26,1035.53 1134.86,1034.69 1135.45,1033.91 1136.05,1033.20 1136.64,1032.55 1137.24,1031.98 1137.84,1031.47 1138.43,1031.02 1139.03,1030.65 1139.62,1030.34 1140.22,1030.11 1140.81,1029.94 1141.40,1029.83 1142.00,1029.80 1142.60,1029.83 1143.19,1029.94 1143.79,1030.11 1144.38,1030.34 1144.97,1030.65 1145.57,1031.02 1146.16,1031.47 1146.76,1031.98 1147.36,1032.55 1147.95,1033.20 1148.55,1033.91 1149.14,1034.69 1149.73,1035.53 1150.33,1036.45 1150.92,1037.43 1151.52,1038.47 1152.12,1039.58 1152.71,1040.76 1153.31,1042.00 1153.90,1043.31 1154.49,1044.68 1155.09,1046.12 1155.68,1047.62 1156.28,1049.18 1156.88,1050.81 1157.47,1052.50 1158.07,1054.25 1158.66,1056.07 1159.26,1057.94 1159.85,1059.88 1160.44,1061.88 1161.04,1063.94 1161.63,1066.06 1162.23,1068.24 1162.83,1070.47 1163.42,1072.77 1164.02,1075.12 1164.61,1077.53 1165.20,1079.99 1165.80,1082.51 1166.39,1085.09 1166.99,1087.72 1167.59,1090.40 1168.18,1093.14 1168.78,1095.93 1169.37,1098.77 1169.96,1101.66 1170.56,1104.60 1171.15,1107.60 1171.75,1110.64 1172.35,1113.73 1172.94,1116.86 1173.54,1120.05 1174.13,1123.28 1174.72,1126.55 1175.32,1129.87 1175.91,1133.23 1176.51,1136.64 1177.11,1140.08 1177.70,1143.57 1178.30,1147.10 1178.89,1150.66 1179.48,1154.27 1180.08,1157.91 1180.67,1161.59 1181.27,1165.30 1181.87,1169.05 1182.46,1172.84 1183.06,1176.65 1183.65,1180.50 1184.24,1184.38 1184.84,1188.28 1185.43,1192.22 1186.03,1196.19 1186.62,1200.18 1187.22,1204.20 1187.82,1208.24 1188.41,1212.31 1189.01,1216.40 1189.60,1220.51 1190.19,1224.64 1190.79,1228.80 1191.38,1232.97 1191.98,1237.16 1192.58,1241.37 1193.17,1245.59 1193.77,1249.83 1194.36,1254.08 1194.95,1258.35 1195.55,1262.62 1196.14,1266.91 1196.74,1271.21 1197.34,1275.51 1197.93,1279.83 1198.53,1284.15 1199.12,1288.47 1199.71,1292.80 1200.31,1297.13 1200.90,1301.46 1201.50,1305.80 1202.10,1310.14 1202.69,1314.47 1203.29,1318.80 1203.88,1323.13 1204.47,1327.45 1205.07,1331.77 1205.66,1336.09 1206.26,1340.39 1206.86,1344.69 1207.45,1348.98 1208.05,1353.25 1208.64,1357.52 1209.23,1361.77 1209.83,1366.01 1210.42,1370.23 1211.02,1374.44 1211.62,1378.63 1212.21,1382.80 1212.81,1386.96 1213.40,1391.09 1213.99,1395.20 1214.59,1399.29 1215.18,1403.36 1215.78,1407.40 1216.38,1411.42 1216.97,1415.41 1217.57,1419.38 1218.16,1423.32 1218.75,1427.22 1219.35,1431.10 1219.94,1434.95 1220.54,1438.76 1221.13,1442.55 1221.73,1446.30 1222.33,1450.01 1222.92,1453.69 1223.52,1457.33 1224.11,1460.94 1224.70,1464.50 1225.30,1468.03 1225.89,1471.52 1226.49,1474.96 1227.09,1478.37 1227.68,1481.73 1228.27,1485.05 1228.87,1488.32 1229.46,1491.55 1230.06,1494.74 1230.65,1497.87 1231.25,1500.96 1231.85,1504.00 1232.44,1507.00 1233.04,1509.94 1233.63,1512.83 1234.23,1515.67 1234.82,1518.46 1235.41,1521.20 1236.01,1523.88 1236.61,1526.51 1237.20,1529.09 1237.80,1531.61 1238.39,1534.07 1238.98,1536.48 1239.58,1538.83 1240.17,1541.13 1240.77,1543.36 1241.37,1545.54 1241.96,1547.66 1242.56,1549.72 1243.15,1551.72 1243.75,1553.66 1244.34,1555.53 1244.93,1557.35 1245.53,1559.10 1246.12,1560.79 1246.72,1562.42 1247.32,1563.98 1247.91,1565.48 1248.50,1566.92 1249.10,1568.29 1249.69,1569.60 1250.29,1570.84 1250.88,1572.02 1251.48,1573.13 1252.08,1574.17 1252.67,1575.15 1253.27,1576.07 1253.86,1576.91 1254.45,1577.69 1255.05,1578.40 1255.64,1579.05 1256.24,1579.62 1256.84,1580.13 1257.43,1580.58 1258.02,1580.95 1258.62,1581.26 1259.21,1581.49 1259.81,1581.66 1260.40,1581.77 1261.00,1581.80 1261.60,1581.77 1262.19,1581.66 1262.79,1581.49 1263.38,1581.26 1263.98,1580.95 1264.57,1580.58 1265.16,1580.13 1265.76,1579.62 1266.36,1579.05 1266.95,1578.40 1267.55,1577.69 1268.14,1576.91 1268.73,1576.07 1269.33,1575.15 1269.92,1574.17 1270.52,1573.13 1271.12,1572.02 1271.71,1570.84 1272.31,1569.60 1272.90,1568.29 1273.50,1566.92 1274.09,1565.48 1274.68,1563.98 1275.28,1562.42 1275.88,1560.79 1276.47,1559.10 1277.07,1557.35 1277.66,1555.53 1278.25,1553.66 1278.85,1551.72 1279.44,1549.72 1280.04,1547.66 1280.63,1545.54 1281.23,1543.36 1281.83,1541.13 1282.42,1538.83 1283.02,1536.48 1283.61,1534.07 1284.20,1531.61 1284.80,1529.09 1285.39,1526.51 1285.99,1523.88 1286.59,1521.20 1287.18,1518.46 1287.77,1515.67 1288.37,1512.83 1288.96,1509.94 1289.56,1507.00 1290.15,1504.00 1290.75,1500.96 1291.35,1497.87 1291.94,1494.74 1292.54,1491.55 1293.13,1488.32 1293.73,1485.05 1294.32,1481.73 1294.91,1478.37 1295.51,1474.96 1296.11,1471.52 1296.70,1468.03 1297.30,1464.50 1297.89,1460.94 1298.48,1457.33 1299.08,1453.69 1299.67,1450.01 1300.27,1446.30 1300.87,1442.55 1301.46,1438.76 1302.06,1434.95 1302.65,1431.10 1303.25,1427.22 1303.84,1423.32 1304.43,1419.38 1305.03,1415.41 1305.62,1411.42 1306.22,1407.40 1306.82,1403.36 1307.41,1399.29 1308.00,1395.20 1308.60,1391.09 1309.19,1386.96 1309.79,1382.80 1310.38,1378.63 1310.98,1374.44 1311.58,1370.23 1312.17,1366.01 1312.77,1361.77 1313.36,1357.52 1313.95,1353.25 1314.55,1348.98 1315.14,1344.69 1315.74,1340.39 1316.34,1336.09 1316.93,1331.77 1317.52,1327.45 1318.12,1323.13 1318.71,1318.80 1319.31,1314.47 1319.90,1310.14 1320.50,1305.80 1321.10,1301.46 1321.69,1297.13 1322.29,1292.80 1322.88,1288.47 1323.48,1284.15 1324.07,1279.83 1324.66,1275.51 1325.26,1271.21 1325.86,1266.91 1326.45,1262.62 1327.05,1258.35 1327.64,1254.08 1328.23,1249.83 1328.83,1245.59 1329.42,1241.37 1330.02,1237.16 1330.62,1232.97 1331.21,1228.80 1331.81,1224.64 1332.40,1220.51 1333.00,1216.40 1333.59,1212.31 1334.18,1208.24 1334.78,1204.20 1335.38,1200.18 1335.97,1196.19 1336.57,1192.22 1337.16,1188.28 1337.75,1184.38 1338.35,1180.50 1338.94,1176.65 1339.54,1172.84 1340.13,1169.05 1340.73,1165.30 1341.33,1161.59 1341.92,1157.91 1342.52,1154.27 1343.11,1150.66 1343.70,1147.10 1344.30,1143.57 1344.89,1140.08 1345.49,1136.64 1346.09,1133.23 1346.68,1129.87 1347.27,1126.55 1347.87,1123.28 1348.46,1120.05 1349.06,1116.86 1349.65,1113.73 1350.25,1110.64 1350.85,1107.60 1351.44,1104.60 1352.04,1101.66 1352.63,1098.77 1353.23,1095.93 1353.82,1093.14 1354.41,1090.40 1355.01,1087.72 1355.61,1085.09 1356.20,1082.51 1356.80,1079.99 1357.39,1077.53 1357.98,1075.12 1358.58,1072.77 1359.17,1070.47 1359.77,1068.24 1360.37,1066.06 1360.96,1063.94 1361.56,1061.88 1362.15,1059.88 1362.75,1057.94 1363.34,1056.07 1363.93,1054.25 1364.53,1052.50 1365.12,1050.81 1365.72,1049.18 1366.32,1047.62 1366.91,1046.12 1367.50,1044.68 1368.10,1043.31 1368.69,1042.00 1369.29,1040.76 1369.88,1039.58 1370.48,1038.47 1371.08,1037.43 1371.67,1036.45 1372.27,1035.53 1372.86,1034.69 1373.45,1033.91 1374.05,1033.20 1374.64,1032.55 1375.24,1031.98 1375.84,1031.47 1376.43,1031.02 1377.02,1030.65 1377.62,1030.34 1378.21,1030.11 1378.81,1029.94 1379.40,1029.83 1380.00,1029.80" fill="none" stroke="#adadad" stroke-width="2" stroke-dasharray="3.8 4.2"/><rect x="185.75" y="1029.80" width="8.5" height="276.00" fill="#009900"/><rect x="352.35" y="1305.80" width="8.5" height="85.29" fill="#cc0000"/><rect x="518.95" y="1305.80" width="8.5" height="223.29" fill="#cc0000"/><rect x="685.55" y="1082.51" width="8.5" height="223.29" fill="#009900"/><rect x="852.15" y="1220.51" width="8.5" height="85.29" fill="#009900"/><rect x="1018.75" y="1305.80" width="8.5" height="276.00" fill="#cc0000"/><rect x="1185.35" y="1220.51" width="8.5" height="85.29" fill="#009900"/><rect x="1351.95" y="1082.51" width="8.5" height="223.29" fill="#009900"/></svg>
<div class="t" style="top:1015.34px;font-size:27.00px;font-family:'Liberation Sans',sans-serif;color:#000;left:104.72px;">1.0</div>
<div class="t" style="top:1153.34px;font-size:27.00px;font-family:'Liberation Sans',sans-serif;color:#000;left:104.80px;">0.5</div>
<div class="t" style="top:1291.34px;font-size:27.00px;font-family:'Liberation Sans',sans-serif;color:#000;left:104.72px;">0.0</div>
<div class="t" style="top:1429.34px;font-size:27.00px;font-family:'Liberation Sans',sans-serif;color:#000;left:95.81px;">-0.5</div>
<div class="t" style="top:1567.34px;font-size:27.00px;font-family:'Liberation Sans',sans-serif;color:#000;left:95.73px;">-1.0</div>
<div class="t" style="top:1630.14px;font-size:27.00px;font-family:'Liberation Sans',sans-serif;color:#000;left:182.49px;">0</div>
<div class="t" style="top:1630.14px;font-size:27.00px;font-family:'Liberation Sans',sans-serif;color:#000;left:471.98px;">10</div>
<div class="t" style="top:1630.14px;font-size:27.00px;font-family:'Liberation Sans',sans-serif;color:#000;left:769.83px;">20</div>
<div class="t" style="top:1630.14px;font-size:27.00px;font-family:'Liberation Sans',sans-serif;color:#000;left:1067.50px;">30</div>
<div class="t" style="top:1630.14px;font-size:27.00px;font-family:'Liberation Sans',sans-serif;color:#000;left:1365.20px;">40</div>
<div class="t" style="top:1664.05px;font-size:36.33px;font-family:'Liberation Sans',sans-serif;color:#000;left:720.52px;">Position</div>
<div class="t" style="left:49.53px;top:512.40px;width:0;height:0"><div style="position:absolute;left:0;top:0;transform:rotate(-90deg);transform-origin:0 0"><div class="t" style="left:-500.0px;top:0;width:1000px;text-align:center;font-size:36px">Amplitude / Intensity</div></div></div>
<div class="t" style="left:50.53px;top:1305.70px;width:0;height:0"><div style="position:absolute;left:0;top:0;transform:rotate(-90deg);transform-origin:0 0"><div class="t" style="left:-500.0px;top:0;width:1000px;text-align:center;font-size:36px">Amplitude</div></div></div>
<div class="a" style="left:382px;top:933.5px;width:186.39999999999998px;height:124.5px;background:#ececec;box-shadow:0 0 0 0.5px rgba(0,0,0,0.22),0 8px 30px 0 rgba(0,0,0,0.20)"></div>
<div class="a" style="left:382px;top:942.2px;width:186.39999999999998px;height:35.59999999999991px;background:#7ea6ea"></div>
<div class="t" style="top:947.64px;font-size:26.30px;font-family:'Liberation Sans',sans-serif;color:#fff;letter-spacing:0.675px;left:417.14px;">Electronic</div>
<div class="t" style="top:983.44px;font-size:26.30px;font-family:'Liberation Sans',sans-serif;color:#1e1e1e;letter-spacing:0.567px;left:417.57px;">Ionic</div>
<div class="t" style="top:1019.04px;font-size:26.30px;font-family:'Liberation Sans',sans-serif;color:#1e1e1e;letter-spacing:0.248px;left:417.14px;">Plasmons</div>
</div>
<div class="a" style="left:1510px;top:4px;width:628px;height:970px;border-radius:20px;overflow:hidden;background:#e6e6e6;box-shadow:0 0 1.5px 1px rgba(0,0,0,0.45),0 6px 30px 4px rgba(0,0,0,0.30)">
</div>
<div class="a" style="left:1510px;top:60px;width:628px;height:1px;background:#cfcfcf"></div>
<div class="a" style="left:1525.5px;top:19.6px;width:24.0px;height:24.0px;border-radius:50%;background:linear-gradient(#c9c9c9,#d3d3d3);border:1px solid #a9a9a9"></div>
<div class="a" style="left:1565.8px;top:19.6px;width:24.0px;height:24.0px;border-radius:50%;background:linear-gradient(#c9c9c9,#d3d3d3);border:1px solid #a9a9a9"></div>
<div class="a" style="left:1605.6px;top:19.6px;width:24.0px;height:24.0px;border-radius:50%;background:linear-gradient(#c9c9c9,#d3d3d3);border:1px solid #a9a9a9"></div>
<div class="t" style="top:16.67px;font-size:27.32px;font-family:'Liberation Sans',sans-serif;color:#a6a6a6;font-weight:700;left:1762.07px;">Instructions</div>
<div class="a" style="left:1510px;top:61px;width:64px;height:827px;background:linear-gradient(90deg,#d4d4d4,#dedede 70%,#e0e0e0)"></div>
<div class="a" style="left:1574px;top:61px;width:532px;height:827px;background:#fff"></div>
<div class="a" style="left:2106px;top:61px;width:32px;height:827px;background:#f9f9f9;border-left:1px solid #e8e8e8"></div>
<div class="a" style="left:2116px;top:70px;width:16px;height:244px;background:#7c7c7c;border-radius:8px"></div>
<div class="a" style="left:1510px;top:61px;width:596px;height:827px;overflow:hidden">
<div class="t" style="left:80.5px;top:7.07px;font-size:26px;font-family:'Liberation Mono',monospace;color:#000;-webkit-text-stroke:0.35px #000">General</div>
<div class="t" style="right:550px;top:41.07px;font-size:26px;font-family:'Liberation Mono',monospace;color:#a2a2a2;-webkit-text-stroke-width:0.15px">1</div>
<div class="a" style="left:81.20000000000005px;top:51.3px;width:13.700000000000045px;height:2.5999999999999943px;background:#000;border-radius:0.5px"></div>
<div class="a" style="left:96.70000000000005px;top:51.3px;width:13.700000000000045px;height:2.5999999999999943px;background:#000;border-radius:0.5px"></div>
<div class="t" style="right:550px;top:75.07px;font-size:26px;font-family:'Liberation Mono',monospace;color:#a2a2a2;-webkit-text-stroke-width:0.15px">2</div>
<div class="t" style="left:80.5px;top:75.07px;font-size:26px;font-family:'Liberation Mono',monospace;color:#000;-webkit-text-stroke:0.35px #000">This demonstration tries to give</div>
<div class="t" style="right:550px;top:109.07px;font-size:26px;font-family:'Liberation Mono',monospace;color:#a2a2a2;-webkit-text-stroke-width:0.15px">3</div>
<div class="t" style="left:80.5px;top:109.07px;font-size:26px;font-family:'Liberation Mono',monospace;color:#000;-webkit-text-stroke:0.35px #000">a cartoon representation of how</div>
<div class="t" style="right:550px;top:143.07px;font-size:26px;font-family:'Liberation Mono',monospace;color:#a2a2a2;-webkit-text-stroke-width:0.15px">4</div>
<div class="t" style="left:80.5px;top:143.07px;font-size:26px;font-family:'Liberation Mono',monospace;color:#000;-webkit-text-stroke:0.35px #000">an electromagnetic wave (light)</div>
<div class="t" style="right:550px;top:177.07px;font-size:26px;font-family:'Liberation Mono',monospace;color:#a2a2a2;-webkit-text-stroke-width:0.15px">5</div>
<div class="t" style="left:80.5px;top:177.07px;font-size:26px;font-family:'Liberation Mono',monospace;color:#000;-webkit-text-stroke:0.35px #000">interacts with different modes</div>
<div class="t" style="right:550px;top:211.07px;font-size:26px;font-family:'Liberation Mono',monospace;color:#a2a2a2;-webkit-text-stroke-width:0.15px">6</div>
<div class="t" style="left:80.5px;top:211.07px;font-size:26px;font-family:'Liberation Mono',monospace;color:#000;-webkit-text-stroke:0.35px #000">in materials as the light wave</div>
<div class="t" style="right:550px;top:245.07px;font-size:26px;font-family:'Liberation Mono',monospace;color:#a2a2a2;-webkit-text-stroke-width:0.15px">7</div>
<div class="t" style="left:80.5px;top:245.07px;font-size:26px;font-family:'Liberation Mono',monospace;color:#000;-webkit-text-stroke:0.35px #000">moves through the material.</div>
<div class="t" style="right:550px;top:279.07px;font-size:26px;font-family:'Liberation Mono',monospace;color:#a2a2a2;-webkit-text-stroke-width:0.15px">8</div>
<div class="t" style="right:550px;top:313.07px;font-size:26px;font-family:'Liberation Mono',monospace;color:#a2a2a2;-webkit-text-stroke-width:0.15px">9</div>
<div class="t" style="left:80.5px;top:313.07px;font-size:26px;font-family:'Liberation Mono',monospace;color:#000;-webkit-text-stroke:0.35px #000">Input Wave</div>
<div class="t" style="right:550px;top:347.07px;font-size:26px;font-family:'Liberation Mono',monospace;color:#a2a2a2;-webkit-text-stroke-width:0.15px">10</div>
<div class="a" style="left:81.20000000000005px;top:357.3px;width:13.700000000000045px;height:2.6000000000000227px;background:#000;border-radius:0.5px"></div>
<div class="a" style="left:96.70000000000005px;top:357.3px;width:13.700000000000045px;height:2.6000000000000227px;background:#000;border-radius:0.5px"></div>
<div class="t" style="right:550px;top:381.07px;font-size:26px;font-family:'Liberation Mono',monospace;color:#a2a2a2;-webkit-text-stroke-width:0.15px">11</div>
<div class="t" style="left:80.5px;top:381.07px;font-size:26px;font-family:'Liberation Mono',monospace;color:#000;-webkit-text-stroke:0.35px #000">The display in the top shows</div>
<div class="t" style="right:550px;top:415.07px;font-size:26px;font-family:'Liberation Mono',monospace;color:#a2a2a2;-webkit-text-stroke-width:0.15px">12</div>
<div class="t" style="left:80.5px;top:415.07px;font-size:26px;font-family:'Liberation Mono',monospace;color:#000;-webkit-text-stroke:0.35px #000">an input wave amplitude (solid)</div>
<div class="t" style="right:550px;top:449.07px;font-size:26px;font-family:'Liberation Mono',monospace;color:#a2a2a2;-webkit-text-stroke-width:0.15px">13</div>
<div class="t" style="left:80.5px;top:449.07px;font-size:26px;font-family:'Liberation Mono',monospace;color:#000;-webkit-text-stroke:0.35px #000">and intensity (dashed). Use the</div>
<div class="t" style="right:550px;top:483.07px;font-size:26px;font-family:'Liberation Mono',monospace;color:#a2a2a2;-webkit-text-stroke-width:0.15px">14</div>
<div class="t" style="left:80.5px;top:483.07px;font-size:26px;font-family:'Liberation Mono',monospace;color:#000;-webkit-text-stroke:0.35px #000">settings to define the</div>
<div class="t" style="right:550px;top:517.07px;font-size:26px;font-family:'Liberation Mono',monospace;color:#a2a2a2;-webkit-text-stroke-width:0.15px">15</div>
<div class="t" style="left:80.5px;top:517.07px;font-size:26px;font-family:'Liberation Mono',monospace;color:#000;-webkit-text-stroke:0.35px #000">wavelength (k/ko) and offset</div>
<div class="t" style="right:550px;top:551.07px;font-size:26px;font-family:'Liberation Mono',monospace;color:#a2a2a2;-webkit-text-stroke-width:0.15px">16</div>
<div class="t" style="left:80.5px;top:551.07px;font-size:26px;font-family:'Liberation Mono',monospace;color:#000;-webkit-text-stroke:0.35px #000">for the input wave. Use the</div>
<div class="t" style="right:550px;top:585.07px;font-size:26px;font-family:'Liberation Mono',monospace;color:#a2a2a2;-webkit-text-stroke-width:0.15px">17</div>
<div class="t" style="left:80.5px;top:585.07px;font-size:26px;font-family:'Liberation Mono',monospace;color:#000;-webkit-text-stroke:0.35px #000">slider to move the wave as a</div>
<div class="t" style="right:550px;top:619.07px;font-size:26px;font-family:'Liberation Mono',monospace;color:#a2a2a2;-webkit-text-stroke-width:0.15px">18</div>
<div class="t" style="left:80.5px;top:619.07px;font-size:26px;font-family:'Liberation Mono',monospace;color:#000;-webkit-text-stroke:0.35px #000">function of time. Use the Run</div>
<div class="t" style="right:550px;top:653.07px;font-size:26px;font-family:'Liberation Mono',monospace;color:#a2a2a2;-webkit-text-stroke-width:0.15px">19</div>
<div class="t" style="left:80.5px;top:653.07px;font-size:26px;font-family:'Liberation Mono',monospace;color:#000;-webkit-text-stroke:0.35px #000">button to automatically move</div>
<div class="t" style="right:550px;top:687.07px;font-size:26px;font-family:'Liberation Mono',monospace;color:#a2a2a2;-webkit-text-stroke-width:0.15px">20</div>
<div class="t" style="left:80.5px;top:687.07px;font-size:26px;font-family:'Liberation Mono',monospace;color:#000;-webkit-text-stroke:0.35px #000">the wave with real time. The</div>
<div class="t" style="right:550px;top:721.07px;font-size:26px;font-family:'Liberation Mono',monospace;color:#a2a2a2;-webkit-text-stroke-width:0.15px">21</div>
<div class="t" style="left:80.5px;top:721.07px;font-size:26px;font-family:'Liberation Mono',monospace;color:#000;-webkit-text-stroke:0.35px #000">velocity of the wave is fixed</div>
<div class="t" style="right:550px;top:755.07px;font-size:26px;font-family:'Liberation Mono',monospace;color:#a2a2a2;-webkit-text-stroke-width:0.15px">22</div>
<div class="t" style="left:80.5px;top:755.07px;font-size:26px;font-family:'Liberation Mono',monospace;color:#000;-webkit-text-stroke:0.35px #000">regardless of wavelength (as</div>
<div class="t" style="right:550px;top:789.07px;font-size:26px;font-family:'Liberation Mono',monospace;color:#a2a2a2;-webkit-text-stroke-width:0.15px">23</div>
<div class="t" style="left:80.5px;top:789.07px;font-size:26px;font-family:'Liberation Mono',monospace;color:#000;-webkit-text-stroke:0.35px #000">best possible within the limits</div>
<div class="t" style="right:550px;top:823.07px;font-size:26px;font-family:'Liberation Mono',monospace;color:#a2a2a2;-webkit-text-stroke-width:0.15px">24</div>
<div class="t" style="left:80.5px;top:823.07px;font-size:26px;font-family:'Liberation Mono',monospace;color:#000;-webkit-text-stroke:0.35px #000">of the screen using a timer</div>
</div>
<svg style="left:0;top:0" width="2142" height="1752" viewBox="0 0 2142 1752"><ellipse cx="1549.6" cy="78.4" rx="5.4" ry="8.4" fill="none" stroke="#474747" stroke-width="2.4"/><path d="M1546.2 85 L1553 71.8" stroke="#474747" stroke-width="2.2"/></svg>
<div class="a" style="left:1510px;top:888px;width:628px;height:86px;background:#fdfdfd;border-radius:0 0 20px 20px"></div>
<div class="a" style="left:1510px;top:888px;width:598px;height:32px;background:#f8f8f8;border-top:1.5px solid #e4e4e4;border-bottom:1.5px solid #e6e6e6"></div>
<div class="a" style="left:1516px;top:898px;width:36px;height:16px;background:#7c7c7c;border-radius:8px"></div>
<div class="a" style="left:1678px;top:922px;width:1px;height:50px;background:#b5b5b5"></div>
<div class="a" style="left:1993px;top:922px;width:1px;height:50px;background:#b5b5b5"></div>
<div class="t" style="top:938.85px;font-size:20.50px;font-family:'Liberation Sans',sans-serif;color:#2b2b2b;letter-spacing:1.200px;left:1703.92px;">UTF-8</div>
<svg style="left:1521px;top:933px" width="30" height="30" viewBox="0 0 30 30"><defs><linearGradient id="gi" x1="0" y1="0" x2="0" y2="1"><stop offset="0" stop-color="#3f7dcc"/><stop offset="1" stop-color="#2a6bc4"/></linearGradient></defs><circle cx="15" cy="15" r="14.5" fill="url(#gi)" stroke="#2a5ea8" stroke-width="1"/><circle cx="15" cy="8.3" r="1.9" fill="#fff"/><path d="M11.5 12 H16.5 V21.5 H18.5 V23.5 H11.5 V21.5 H13.5 V14 H11.5 Z" fill="#fff"/></svg>
<svg style="left:0;top:0" width="2142" height="1752" viewBox="0 0 2142 1752"><g transform="translate(1578.5 961.5) rotate(-45)"><path d="M0 0 L7.5 -4.2 H31 V4.2 H7.5 Z" fill="#f2d22a" stroke="#c29a12" stroke-width="1"/><path d="M7.5 -1 H31" stroke="#fbe98c" stroke-width="2"/><path d="M0 0 L7.5 -4.2 V4.2 Z" fill="#e9c796" stroke="#b8946a" stroke-width="0.8"/><path d="M0 0 L2.8 -1.6 V1.6 Z" fill="#2b2b2b"/><rect x="31" y="-4.2" width="3.2" height="8.4" fill="#b3bfcb" stroke="#8a96a2" stroke-width="0.6"/><rect x="34.2" y="-4.2" width="5.6" height="8.4" rx="1" fill="#e02a2a" stroke="#b01a1a" stroke-width="0.6"/></g></svg>
<svg style="left:0;top:0" width="2142" height="1752" viewBox="0 0 2142 1752"><defs><linearGradient id="gmag" x1="0" y1="0" x2="0" y2="1"><stop offset="0" stop-color="#f2f7fc"/><stop offset="1" stop-color="#aec6e6"/></linearGradient></defs><path d="M1641.5 951 L1632 960.8" stroke="#3f4c5a" stroke-width="4.6" stroke-linecap="round"/><circle cx="1648.6" cy="943.3" r="9.3" fill="url(#gmag)" stroke="#56677a" stroke-width="2.4"/></svg>
<svg style="left:1797px;top:934px" width="34" height="28" viewBox="0 0 34 28"><path d="M30 14 H6 M15 5 L5.5 14 L15 23" fill="none" stroke="#a9a9a9" stroke-width="4.5" stroke-linecap="round" stroke-linejoin="round"/></svg>
<svg style="left:1909px;top:934px" width="34" height="28" viewBox="0 0 34 28"><path d="M4 14 H28 M19 5 L28.5 14 L19 23" fill="none" stroke="#a9a9a9" stroke-width="4.5" stroke-linecap="round" stroke-linejoin="round"/></svg>
<svg style="left:1859px;top:937px" width="22" height="22" viewBox="0 0 22 22"><circle cx="11" cy="11" r="10" fill="#2c7be0"/><circle cx="11" cy="11" r="1" fill="#9cc3f2"/></svg>
<div class="a" style="left:1508px;top:994px;width:636px;height:348px;border-radius:20px;overflow:hidden;background:#e6e6e6;box-shadow:0 0 1.5px 1px rgba(0,0,0,0.45),0 6px 30px 4px rgba(0,0,0,0.30)">
</div>
<div class="a" style="left:1508px;top:1051px;width:634px;height:1px;background:#cfcfcf"></div>
<div class="a" style="left:1524px;top:1010px;width:24px;height:24px;border-radius:50%;background:linear-gradient(#c9c9c9,#d3d3d3);border:1px solid #a9a9a9"></div>
<div class="a" style="left:1564px;top:1010px;width:24px;height:24px;border-radius:50%;background:linear-gradient(#c9c9c9,#d3d3d3);border:1px solid #a9a9a9"></div>
<div class="a" style="left:1604px;top:1010px;width:24px;height:24px;border-radius:50%;background:linear-gradient(#c9c9c9,#d3d3d3);border:1px solid #a9a9a9"></div>
<div class="t" style="top:1007.18px;font-size:26.84px;font-family:'Liberation Sans',sans-serif;color:#a6a6a6;font-weight:700;left:1681.90px;">Demo Waves in Materials</div>
<div class="a" style="left:1508px;top:1052px;width:634px;height:52px;background:linear-gradient(#f0f0f0,#d2d2d2)"></div>
<div class="a" style="left:1508px;top:1103px;width:634px;height:2.5px;background:#a9a9a9"></div>
<div class="a" style="left:1508px;top:1105px;width:602px;height:113px;background:#fff"></div>
<div class="a" style="left:1508px;top:1105.5px;width:634px;height:4.5px;background:linear-gradient(#e2e2e2,#ececec)"></div>
<div class="a" style="left:1508px;top:1110px;width:20px;height:108px;background:linear-gradient(90deg,#d6d6d6,#dedede)"></div>
<div class="a" style="left:2110px;top:1105px;width:32px;height:82px;background:#f7f7f7"></div>
<div class="a" style="left:2120px;top:1116px;width:16px;height:64px;background:#7c7c7c;border-radius:8px"></div>
<div class="a" style="left:2110px;top:1187px;width:32px;height:31px;background:#e9e9e9;box-shadow:inset 0 0 0 1.5px #b9b9b9"></div>
<svg style="left:2112px;top:1188px" width="28" height="28" viewBox="0 0 28 28"><circle cx="14" cy="14" r="13" fill="#2f74cf" stroke="#2560ad" stroke-width="1"/><path d="M9.5 10.5 C9.5 6.5 18.5 6.2 18.5 10.5 C18.5 13.5 14 13.5 14 16.8" fill="none" stroke="#fff" stroke-width="2.8" stroke-linecap="round"/><circle cx="14" cy="21" r="1.8" fill="#fff"/></svg>
<svg style="left:0;top:0" width="2142" height="1752" viewBox="0 0 2142 1752"><ellipse cx="1521" cy="1129.6" rx="4.6" ry="7.6" fill="none" stroke="#3a3a3a" stroke-width="1.8"/><path d="M1518.4 1136.3 L1524 1125.1" stroke="#3a3a3a" stroke-width="1.7"/></svg>
<div class="a" style="left:1508px;top:1217.5px;width:636px;height:19.0px;border:1.5px solid #000;background:linear-gradient(#d8d8d8 0,#d8d8d8 3.5px,#f6f6f6 4px,#fbfbfb 9.5px,#dcdcdc 10px,#e8e8e8 16px)"></div>
<div class="a" style="left:1508px;top:1236.5px;width:634px;height:51.5px;background:linear-gradient(90deg,#ececec,#fafafa 30px,#fff 60px)"></div>
<div class="a" style="left:1515px;top:1242.7px;width:2px;height:26.299999999999955px;background:#000"></div>
<div class="a" style="left:1508px;top:1288px;width:634px;height:1px;background:#8c8c8c"></div>
<div class="a" style="left:1508px;top:1289px;width:635px;height:53px;background:linear-gradient(#f8f8f8,#dfdfdf);border-radius:0 0 20px 20px"></div>
<svg style="left:0;top:0" width="2142" height="1752" viewBox="0 0 2142 1752"><defs><linearGradient id="gdoc" x1="0" y1="0" x2="0" y2="1"><stop offset="0" stop-color="#f4f7fc"/><stop offset="1" stop-color="#c9d9ee"/></linearGradient><linearGradient id="gfold" x1="0" y1="0" x2="0" y2="1"><stop offset="0" stop-color="#fbe98a"/><stop offset="1" stop-color="#f0cd1e"/></linearGradient><linearGradient id="gflop" x1="0" y1="0" x2="0" y2="1"><stop offset="0" stop-color="#4f93f0"/><stop offset="1" stop-color="#2f6fd6"/></linearGradient><linearGradient id="gprn" x1="0" y1="0" x2="0" y2="1"><stop offset="0" stop-color="#f7f9fb"/><stop offset="1" stop-color="#b9c2cc"/></linearGradient><linearGradient id="gsky" x1="0" y1="0" x2="0" y2="1"><stop offset="0" stop-color="#7ea8e0"/><stop offset="0.5" stop-color="#a9c6ea"/><stop offset="1" stop-color="#90b070"/></linearGradient><linearGradient id="glens" x1="0" y1="0" x2="0" y2="1"><stop offset="0" stop-color="#f4f8fc"/><stop offset="1" stop-color="#b8cde6"/></linearGradient><linearGradient id="gbox" x1="0" y1="0" x2="1" y2="1"><stop offset="0" stop-color="#e4e4e4"/><stop offset="1" stop-color="#c4c4c4"/></linearGradient></defs><circle cx="1524" cy="1068" r="2.2" fill="#8d8d8d"/><circle cx="1524" cy="1080" r="2.2" fill="#8d8d8d"/><rect x="1546.8" y="1064.8" width="21.5" height="26.5" fill="url(#gdoc)" stroke="#5b80b2" stroke-width="1.2"/><polygon points="1565.70,1061.80 1567.70,1065.94 1572.28,1065.60 1569.70,1069.40 1572.28,1073.20 1567.70,1072.86 1565.70,1077.00 1563.70,1072.86 1559.12,1073.20 1561.70,1069.40 1559.12,1065.60 1563.70,1065.94" fill="#eef2f8" stroke="#6f8db5" stroke-width="1"/><path d="M1604.5 1091 V1070 Q1604.5 1068.4 1606 1068.4 H1613 L1615 1071.3 H1629 Q1630 1071.3 1630 1072.5 V1091 Z" fill="#f3d44a" stroke="#c28d12" stroke-width="1.1"/><path d="M1604.8 1091.2 L1606.3 1076 H1632.6 L1630 1091.2 Z" fill="url(#gfold)" stroke="#c28d12" stroke-width="1.1"/><path d="M1605 1087.5 H1630.5" stroke="#d9a81c" stroke-width="0.8"/><path d="M1665.5 1065.5 H1690.5 V1090.5 H1668 L1665.5 1088 Z" fill="url(#gflop)" stroke="#2459b8" stroke-width="1.1"/><rect x="1668.5" y="1067.7" width="18.8" height="10.9" fill="#e9f0fa"/><rect x="1671" y="1082.4" width="14.3" height="8.2" fill="#d8dde3"/><rect x="1672.8" y="1084" width="2.8" height="6.6" fill="#2f6fd6"/><rect x="1729" y="1062" width="18" height="12" fill="#eef4fb" stroke="#6a8fc0" stroke-width="1"/><rect x="1723.5" y="1075.5" width="29" height="15.5" rx="1.5" fill="url(#gprn)" stroke="#5c6f86" stroke-width="1.1"/><rect x="1727.5" y="1073.3" width="21.5" height="6.2" fill="#6d6d6d" stroke="#1e1e1e" stroke-width="1.1"/><rect x="1743.5" y="1082.5" width="5" height="2" fill="#9fd79a" stroke="#6b8a68" stroke-width="0.6"/><rect x="1728.5" y="1088.2" width="19.5" height="4.6" fill="#4b5663" stroke="#2f3740" stroke-width="0.8"/><rect x="1785.3" y="1064.3" width="25.5" height="27.5" fill="#f2f6fb" stroke="#5f86bd" stroke-width="1.1"/><rect x="1787.5" y="1066.5" width="21" height="21" fill="url(#gsky)"/><circle cx="1792.5" cy="1072.5" r="2.3" fill="#f0c050"/><path d="M1787.5 1080 Q1796 1075 1806 1079 L1808.5 1079 V1087.5 H1787.5 Z" fill="#8f9a48"/><path d="M1787.5 1084 Q1797 1081 1808.5 1083 V1087.5 H1787.5 Z" fill="#9cc060"/><path d="M1799.5 1079.5 H1813 V1093 H1801.5 L1799.5 1091 Z" fill="url(#gflop)" stroke="#2459b8" stroke-width="1"/><rect x="1802" y="1081" width="8.5" height="4.5" fill="#e9f0fa"/><rect x="1803" y="1088" width="6.5" height="5" fill="#d8dde3"/><rect x="1845.5" y="1062" width="28.5" height="28" fill="#cccbf8"/><path d="M1845 1062 V1091 H1874" fill="none" stroke="#000" stroke-width="2"/><path d="M1842 1066.8 H1845" stroke="#000" stroke-width="1.8"/><path d="M1842 1072.8 H1845" stroke="#000" stroke-width="1.8"/><path d="M1842 1078.9 H1845" stroke="#000" stroke-width="1.8"/><path d="M1842 1084.9 H1845" stroke="#000" stroke-width="1.8"/><path d="M1844.7 1091 V1094" stroke="#000" stroke-width="1.8"/><path d="M1850.9 1091 V1094" stroke="#000" stroke-width="1.8"/><path d="M1858.9 1091 V1094" stroke="#000" stroke-width="1.8"/><path d="M1864.9 1091 V1094" stroke="#000" stroke-width="1.8"/><path d="M1872.9 1091 V1094" stroke="#000" stroke-width="1.8"/><path d="M1848.8 1066.7 C1851 1072 1856 1087 1859.1 1086.7 C1862 1086.5 1864 1080.7 1867 1080.7 C1870 1080.7 1872 1085 1874 1086.5" fill="none" stroke="#e40000" stroke-width="1.7"/><path d="M1848.8 1083.5 C1851 1078 1852.5 1070.9 1854.9 1070.9 C1858 1070.9 1862 1086.4 1866 1086.4 C1869 1086.4 1871.5 1081.5 1874 1080.8" fill="none" stroke="#e40000" stroke-width="1.7"/><path d="M1866.4 1066.6 V1076.6 M1861.6 1071.5 H1871.2" stroke="#118a11" stroke-width="4"/><path d="M1866.4 1067.4 V1075.8 M1862.4 1071.5 H1870.4" stroke="#6af76a" stroke-width="1.8"/><rect x="1896" y="1055" width="2" height="2" fill="#5f5f5f"/><rect x="1896" y="1061" width="2" height="2" fill="#5f5f5f"/><rect x="1896" y="1067" width="2" height="2" fill="#5f5f5f"/><rect x="1896" y="1073" width="2" height="2" fill="#5f5f5f"/><rect x="1896" y="1079" width="2" height="2" fill="#5f5f5f"/><rect x="1896" y="1085" width="2" height="2" fill="#5f5f5f"/><rect x="1896" y="1091" width="2" height="2" fill="#5f5f5f"/><rect x="1896" y="1097" width="2" height="2" fill="#5f5f5f"/><circle cx="1938" cy="1077.3" r="14.8" fill="#d0d0fa" stroke="#3a0aa0" stroke-width="1.9"/><path d="M1925.4 1081.4 C1926 1077 1927 1075.8 1927.9 1075.8 C1929.5 1075.8 1930.5 1086.8 1932.4 1086.8 C1934.5 1086.8 1936 1065.2 1938.2 1065.2 C1940 1065.2 1941 1076 1942.5 1082 M1945 1077 C1946 1075.5 1947 1075 1948 1075 C1949 1075 1950 1076 1950.5 1077" fill="none" stroke="#ff0000" stroke-width="1.7"/><path d="M1942.8 1086.7 L1937 1093.0" stroke="#3d4650" stroke-width="3.2" stroke-linecap="round"/><path d="M1942.8 1086.7 L1937 1093.0" stroke="#9aa6b2" stroke-width="1.2" stroke-linecap="round"/><circle cx="1947" cy="1082.5" r="5.8" fill="url(#glens)" stroke="#56616d" stroke-width="1.6"/><rect x="1984.8" y="1066.3" width="26.6" height="23.2" fill="#eef4fb" stroke="#5f86bd" stroke-width="1.1"/><rect x="1986.5" y="1069" width="2" height="2" fill="#5a78a8"/><rect x="1990" y="1068.8" width="17" height="2.4" fill="#6ad35a"/><rect x="2007.8" y="1069" width="2" height="2" fill="#5a78a8"/><rect x="1986.5" y="1073" width="2" height="2" fill="#5a78a8"/><rect x="1990" y="1072.8" width="17" height="2.4" fill="#6ad35a"/><rect x="2007.8" y="1073" width="2" height="2" fill="#5a78a8"/><rect x="1986.5" y="1077" width="2" height="2" fill="#5a78a8"/><rect x="1990" y="1076.8" width="17" height="2.4" fill="#6ad35a"/><rect x="2007.8" y="1077" width="2" height="2" fill="#5a78a8"/><rect x="1986.5" y="1081" width="2" height="2" fill="#5a78a8"/><rect x="1990" y="1080.8" width="17" height="2.4" fill="#6ad35a"/><rect x="2007.8" y="1081" width="2" height="2" fill="#5a78a8"/><rect x="1986.5" y="1085" width="2" height="2" fill="#5a78a8"/><rect x="1990" y="1084.8" width="17" height="2.4" fill="#6ad35a"/><rect x="2007.8" y="1085" width="2" height="2" fill="#5a78a8"/><path d="M2003.3 1086.5 L1997.5 1092.8" stroke="#3d4650" stroke-width="3.2" stroke-linecap="round"/><path d="M2003.3 1086.5 L1997.5 1092.8" stroke="#9aa6b2" stroke-width="1.2" stroke-linecap="round"/><circle cx="2007.5" cy="1082.3" r="5.8" fill="url(#glens)" stroke="#56616d" stroke-width="1.6"/><rect x="2043.5" y="1065.5" width="29" height="25" fill="url(#gdoc)" stroke="#2d6ac8" stroke-width="1.3"/><rect x="2043.5" y="1065.5" width="29" height="3" fill="#3a78d8"/><path d="M2062.1000000000004 1086.5 L2056.3 1092.8" stroke="#3d4650" stroke-width="3.2" stroke-linecap="round"/><path d="M2062.1000000000004 1086.5 L2056.3 1092.8" stroke="#9aa6b2" stroke-width="1.2" stroke-linecap="round"/><circle cx="2066.3" cy="1082.3" r="5.8" fill="url(#glens)" stroke="#56616d" stroke-width="1.6"/><path d="M2107 1068.5 H2112.5 L2120.5 1077.5 L2112.5 1086 H2107 L2115 1077.5 Z M2119 1068.5 H2124.5 L2132.5 1077.5 L2124.5 1086 H2119 L2127 1077.5 Z" fill="#474747"/><g transform="translate(1723.5,14.7) scale(1.0)"><path d="M1 8 L15 2 L28 7 L28 22 L14 29.5 L1 23 Z" fill="url(#gbox)" stroke="#a9a9a9" stroke-width="1"/><path d="M1 8 L14 14 L28 7 M14 14 V29.5" fill="none" stroke="#b0b0b0" stroke-width="1"/><path d="M9 4.5 L22 10.5 L25 9 L12 3.2 Z" fill="#d6d6d6" stroke="#ababab" stroke-width="0.8"/><path d="M3 19 L11 11" stroke="#a8a8a8" stroke-width="0.9"/><path d="M16 25 V17 M18.5 24 V16 M21 23 V15.5 M23.5 22 V14.5" stroke="#b5b5b5" stroke-width="0.8"/></g><g transform="translate(1643,1004.8) scale(1.0)"><path d="M1 8 L15 2 L28 7 L28 22 L14 29.5 L1 23 Z" fill="url(#gbox)" stroke="#a9a9a9" stroke-width="1"/><path d="M1 8 L14 14 L28 7 M14 14 V29.5" fill="none" stroke="#b0b0b0" stroke-width="1"/><path d="M9 4.5 L22 10.5 L25 9 L12 3.2 Z" fill="#d6d6d6" stroke="#ababab" stroke-width="0.8"/><path d="M3 19 L11 11" stroke="#a8a8a8" stroke-width="0.9"/><path d="M16 25 V17 M18.5 24 V16 M21 23 V15.5 M23.5 22 V14.5" stroke="#b5b5b5" stroke-width="0.8"/></g></svg>
</body></html>
